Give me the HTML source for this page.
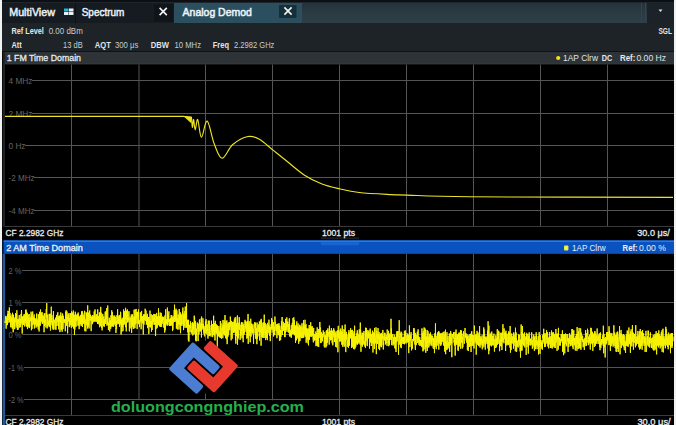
<!DOCTYPE html>
<html><head><meta charset="utf-8"><style>
html,body{margin:0;padding:0;width:676px;height:425px;overflow:hidden;background:#f2f2f2}
svg{display:block}
text{font-family:"Liberation Sans",sans-serif}
</style></head><body>
<svg width="676" height="425" viewBox="0 0 676 425">
<rect x="0" y="0" width="676" height="425" fill="#f2f2f2" />
<rect x="2" y="0" width="672" height="425" fill="#0c1014" />
<rect x="2" y="3" width="672" height="20" fill="#151b21" />
<line x1="2" y1="2.5" x2="674" y2="2.5" stroke="#1e252b" stroke-width="1"/>
<rect x="174" y="3" width="128" height="20" fill="#2c4f60" />
<defs><linearGradient id="gs" x1="0" y1="0" x2="0" y2="1"><stop offset="0" stop-color="#24323a"/><stop offset="0.5" stop-color="#2b3b44"/><stop offset="1" stop-color="#2e3f47"/></linearGradient></defs>
<rect x="302" y="2.8" width="345" height="20.8" fill="url(#gs)" />
<rect x="641" y="3" width="1" height="20" fill="#34444c" />
<rect x="645" y="3" width="1" height="20" fill="#34444c" />
<rect x="647" y="3" width="27" height="20" fill="#1b2329" />
<rect x="64" y="8.5" width="4.5" height="3" fill="#2ab8e0" />
<rect x="69" y="8.5" width="4.5" height="3" fill="#e8f0f4" />
<rect x="64" y="12" width="4.5" height="3" fill="#e8f0f4" />
<rect x="69" y="12" width="4.5" height="3" fill="#e8f0f4" />
<line x1="75.5" y1="3" x2="75.5" y2="23" stroke="#0c1115" stroke-width="1"/>
<rect x="154" y="4.5" width="19" height="17" fill="#0f1418" />
<rect x="279" y="5" width="17.5" height="13" fill="#16303a" />
<path d="M159.6 7.9L166.79999999999998 15.1M166.79999999999998 7.9L159.6 15.1" stroke="#f4f4f4" stroke-width="1.6" fill="none"/>
<path d="M284.4 7.4L291.6 14.6M291.6 7.4L284.4 14.6" stroke="#f4f4f4" stroke-width="1.6" fill="none"/>
<path d="M658.5 9.5L662.5 9.5L660.5 12Z" fill="#e0e0e0"/>
<rect x="2" y="23" width="672" height="28" fill="#1d2327" />
<rect x="2" y="51" width="672" height="1.2" fill="#0e1214" />
<rect x="2" y="52" width="672" height="12.5" fill="#2d3336" />
<line x1="5" y1="64" x2="674" y2="64" stroke="#3a3f42" stroke-width="1"/>
<rect x="2" y="64.5" width="672" height="162" fill="#000" />
<rect x="3" y="52" width="2" height="175" fill="#202224" />
<rect x="2" y="52" width="1" height="175" fill="#08090a" />
<line x1="5" y1="226.5" x2="674" y2="226.5" stroke="#3a3a3a" stroke-width="1"/>
<rect x="2" y="227" width="672" height="13.5" fill="#000" />
<rect x="2" y="239.5" width="2" height="14.5" fill="#0a1a30" />
<rect x="3.7" y="240.2" width="670.3" height="13.6" fill="#0a52c0" />
<line x1="3.7" y1="241.2" x2="674" y2="241.2" stroke="#3a8ee6" stroke-width="1"/>
<rect x="2" y="254" width="672" height="171" fill="#000" />
<rect x="2.5" y="254" width="2.6" height="171" fill="#28568f" />
<line x1="5" y1="415.5" x2="674" y2="415.5" stroke="#3a3a3a" stroke-width="1"/>
<line x1="71.5" y1="64.5" x2="71.5" y2="226" stroke="#555555" stroke-width="1"/>
<line x1="139" y1="64.5" x2="139" y2="226" stroke="#555555" stroke-width="1"/>
<line x1="205.5" y1="64.5" x2="205.5" y2="226" stroke="#555555" stroke-width="1"/>
<line x1="272.5" y1="64.5" x2="272.5" y2="226" stroke="#555555" stroke-width="1"/>
<line x1="339.5" y1="64.5" x2="339.5" y2="226" stroke="#555555" stroke-width="1"/>
<line x1="406.5" y1="64.5" x2="406.5" y2="226" stroke="#555555" stroke-width="1"/>
<line x1="473.5" y1="64.5" x2="473.5" y2="226" stroke="#555555" stroke-width="1"/>
<line x1="540.5" y1="64.5" x2="540.5" y2="226" stroke="#555555" stroke-width="1"/>
<line x1="607.5" y1="64.5" x2="607.5" y2="226" stroke="#555555" stroke-width="1"/>
<line x1="32" y1="80.5" x2="674" y2="80.5" stroke="#555555" stroke-width="1"/>
<text x="8.5" y="83.8" font-size="8.8" font-weight="normal" fill="#646464" textLength="24.0" lengthAdjust="spacingAndGlyphs">4 MHz</text>
<line x1="32" y1="113.5" x2="674" y2="113.5" stroke="#555555" stroke-width="1"/>
<text x="8.5" y="116.8" font-size="8.8" font-weight="normal" fill="#646464" textLength="24.0" lengthAdjust="spacingAndGlyphs">2 MHz</text>
<line x1="25" y1="145.5" x2="674" y2="145.5" stroke="#555555" stroke-width="1"/>
<text x="8.5" y="148.8" font-size="8.8" font-weight="normal" fill="#646464" textLength="17.0" lengthAdjust="spacingAndGlyphs">0 Hz</text>
<line x1="34" y1="177.5" x2="674" y2="177.5" stroke="#555555" stroke-width="1"/>
<text x="8.5" y="180.8" font-size="8.8" font-weight="normal" fill="#646464" textLength="26.0" lengthAdjust="spacingAndGlyphs">-2 MHz</text>
<line x1="34" y1="210.5" x2="674" y2="210.5" stroke="#555555" stroke-width="1"/>
<text x="8.5" y="213.8" font-size="8.8" font-weight="normal" fill="#646464" textLength="26.0" lengthAdjust="spacingAndGlyphs">-4 MHz</text>
<line x1="71.5" y1="254" x2="71.5" y2="415" stroke="#555555" stroke-width="1"/>
<line x1="139" y1="254" x2="139" y2="415" stroke="#555555" stroke-width="1"/>
<line x1="205.5" y1="254" x2="205.5" y2="415" stroke="#555555" stroke-width="1"/>
<line x1="272.5" y1="254" x2="272.5" y2="415" stroke="#555555" stroke-width="1"/>
<line x1="339.5" y1="254" x2="339.5" y2="415" stroke="#555555" stroke-width="1"/>
<line x1="406.5" y1="254" x2="406.5" y2="415" stroke="#555555" stroke-width="1"/>
<line x1="473.5" y1="254" x2="473.5" y2="415" stroke="#555555" stroke-width="1"/>
<line x1="540.5" y1="254" x2="540.5" y2="415" stroke="#555555" stroke-width="1"/>
<line x1="607.5" y1="254" x2="607.5" y2="415" stroke="#555555" stroke-width="1"/>
<line x1="22" y1="270.5" x2="674" y2="270.5" stroke="#555555" stroke-width="1"/>
<text x="8.5" y="273.8" font-size="8.8" font-weight="normal" fill="#646464" textLength="13.0" lengthAdjust="spacingAndGlyphs">2 %</text>
<line x1="22" y1="302.5" x2="674" y2="302.5" stroke="#555555" stroke-width="1"/>
<text x="8.5" y="305.8" font-size="8.8" font-weight="normal" fill="#646464" textLength="13.0" lengthAdjust="spacingAndGlyphs">1 %</text>
<line x1="22" y1="334.5" x2="674" y2="334.5" stroke="#555555" stroke-width="1"/>
<text x="8.5" y="337.8" font-size="8.8" font-weight="normal" fill="#646464" textLength="13.0" lengthAdjust="spacingAndGlyphs">0 %</text>
<line x1="24" y1="367.5" x2="674" y2="367.5" stroke="#555555" stroke-width="1"/>
<text x="8.5" y="370.8" font-size="8.8" font-weight="normal" fill="#646464" textLength="15.0" lengthAdjust="spacingAndGlyphs">-1 %</text>
<line x1="24" y1="399.5" x2="674" y2="399.5" stroke="#555555" stroke-width="1"/>
<text x="8.5" y="402.8" font-size="8.8" font-weight="normal" fill="#646464" textLength="15.0" lengthAdjust="spacingAndGlyphs">-2 %</text>
<text x="9.2" y="16" font-size="11" fill="#e8eef2" stroke="#e8eef2" stroke-width="0.5" textLength="45.8" lengthAdjust="spacingAndGlyphs">MultiView</text>
<text x="81.7" y="16.4" font-size="11" fill="#e8eef2" stroke="#e8eef2" stroke-width="0.5" textLength="42.7" lengthAdjust="spacingAndGlyphs">Spectrum</text>
<text x="182.6" y="16.4" font-size="11" fill="#eef4f8" stroke="#eef4f8" stroke-width="0.5" textLength="69.3" lengthAdjust="spacingAndGlyphs">Analog Demod</text>
<text x="11.4" y="33.8" font-size="9.3" font-weight="bold" fill="#e0e4e6" textLength="32.5" lengthAdjust="spacingAndGlyphs">Ref Level</text>
<text x="48.7" y="33.8" font-size="9.3" font-weight="normal" fill="#c8ccce" textLength="34.1" lengthAdjust="spacingAndGlyphs">0.00 dBm</text>
<text x="11.4" y="47.6" font-size="9.3" font-weight="bold" fill="#e0e4e6" textLength="10.3" lengthAdjust="spacingAndGlyphs">Att</text>
<text x="63.1" y="47.6" font-size="9.3" font-weight="normal" fill="#c8ccce" textLength="19.7" lengthAdjust="spacingAndGlyphs">13 dB</text>
<text x="94.8" y="47.6" font-size="9.3" font-weight="bold" fill="#e0e4e6" textLength="16.0" lengthAdjust="spacingAndGlyphs">AQT</text>
<text x="115" y="47.6" font-size="9.3" font-weight="normal" fill="#c8ccce" textLength="23.3" lengthAdjust="spacingAndGlyphs">300 μs</text>
<text x="150.8" y="47.6" font-size="9.3" font-weight="bold" fill="#e0e4e6" textLength="18.2" lengthAdjust="spacingAndGlyphs">DBW</text>
<text x="174.5" y="47.6" font-size="9.3" font-weight="normal" fill="#c8ccce" textLength="26.5" lengthAdjust="spacingAndGlyphs">10 MHz</text>
<text x="212.8" y="47.6" font-size="9.3" font-weight="bold" fill="#e0e4e6" textLength="16.2" lengthAdjust="spacingAndGlyphs">Freq</text>
<text x="234" y="47.6" font-size="9.3" font-weight="normal" fill="#c8ccce" textLength="40.4" lengthAdjust="spacingAndGlyphs">2.2982 GHz</text>
<text x="658.4" y="33.8" font-size="9.3" font-weight="bold" fill="#e0e4e6" textLength="13.6" lengthAdjust="spacingAndGlyphs">SGL</text>
<text x="6.7" y="61.4" font-size="9.5" fill="#e6eaec" stroke="#e6eaec" stroke-width="0.3" textLength="74.3" lengthAdjust="spacingAndGlyphs">1 FM Time Domain</text>
<circle cx="558.2" cy="58" r="2.1" fill="#f0e020"/>
<text x="563" y="61.4" font-size="9.5" font-weight="normal" fill="#dfe3e5" textLength="35.0" lengthAdjust="spacingAndGlyphs">1AP Clrw</text>
<text x="601.8" y="61.4" font-size="9.5" font-weight="bold" fill="#e6eaec" textLength="10.5" lengthAdjust="spacingAndGlyphs">DC</text>
<text x="620" y="61.4" font-size="9.5" font-weight="bold" fill="#e6eaec" textLength="15.4" lengthAdjust="spacingAndGlyphs">Ref:</text>
<text x="636.4" y="61.4" font-size="9.5" font-weight="normal" fill="#dfe3e5" textLength="29.8" lengthAdjust="spacingAndGlyphs">0.00 Hz</text>
<rect x="321" y="237.3" width="38" height="2" fill="#1c1c1c" />
<rect x="321" y="242.2" width="38" height="3" fill="#1764d2" />
<text x="5.6" y="235.8" font-size="9.3" fill="#e8ecee" stroke="#e8ecee" stroke-width="0.3" textLength="57.7" lengthAdjust="spacingAndGlyphs">CF 2.2982 GHz</text>
<text x="321.9" y="235.8" font-size="9.3" fill="#e8ecee" stroke="#e8ecee" stroke-width="0.3" textLength="33.1" lengthAdjust="spacingAndGlyphs">1001 pts</text>
<text x="637.3" y="235.8" font-size="9.3" fill="#e8ecee" stroke="#e8ecee" stroke-width="0.3" textLength="32.4" lengthAdjust="spacingAndGlyphs">30.0 μs/</text>
<text x="6.2" y="250.8" font-size="9.5" fill="#eef2f6" stroke="#eef2f6" stroke-width="0.3" textLength="76.6" lengthAdjust="spacingAndGlyphs">2 AM Time Domain</text>
<rect x="564" y="245.6" width="4.4" height="5" fill="#f0f040"  rx="1"/>
<text x="572" y="250.8" font-size="9.5" font-weight="normal" fill="#e6eef8" textLength="33.7" lengthAdjust="spacingAndGlyphs">1AP Clrw</text>
<text x="622.6" y="250.8" font-size="9.5" font-weight="bold" fill="#eef2f6" textLength="15.1" lengthAdjust="spacingAndGlyphs">Ref:</text>
<text x="639" y="250.8" font-size="9.5" font-weight="normal" fill="#e6eef8" textLength="26.8" lengthAdjust="spacingAndGlyphs">0.00 %</text>
<text x="5.6" y="424.8" font-size="9.3" fill="#e8ecee" stroke="#e8ecee" stroke-width="0.3" textLength="57.7" lengthAdjust="spacingAndGlyphs">CF 2.2982 GHz</text>
<text x="321.9" y="424.8" font-size="9.3" fill="#e8ecee" stroke="#e8ecee" stroke-width="0.3" textLength="33.1" lengthAdjust="spacingAndGlyphs">1001 pts</text>
<text x="637.4" y="424.8" font-size="9.3" fill="#e8ecee" stroke="#e8ecee" stroke-width="0.3">30.0 μs/</text>
<path d="M5 116.4L183.3 116.4L191.5 117.2C191.65 118.88 192.05 126.92 192.40 127.30C192.75 127.68 193.13 119.08 193.60 119.50C194.07 119.92 194.52 129.80 195.20 129.80C195.88 129.80 196.67 118.27 197.70 119.50C198.73 120.73 199.82 136.93 201.40 137.20C202.98 137.47 205.07 120.00 207.20 121.10C209.33 122.20 211.72 137.62 214.20 143.80C216.68 149.98 219.00 158.08 222.10 158.20C225.20 158.32 228.50 148.12 232.80 144.50C237.10 140.88 243.47 137.38 247.90 136.50C252.33 135.62 255.27 136.97 259.40 139.20C263.53 141.43 268.27 146.35 272.70 149.90C277.13 153.45 280.70 156.28 286.00 160.50C291.30 164.72 298.50 171.28 304.50 175.20C310.50 179.12 316.20 181.73 322.00 184.00C327.80 186.27 333.10 187.38 339.30 188.80C345.50 190.22 350.55 191.53 359.20 192.50C367.85 193.47 383.22 194.17 391.20 194.60C399.18 195.03 393.97 194.73 407.10 195.10C420.23 195.47 425.68 196.42 470.00 196.80C514.32 197.18 639.17 197.30 673.00 197.40" fill="none" stroke="#ece428" stroke-width="1.15" stroke-linejoin="round"/>
<path d="M183.3 116 L191.8 116.8 L191.2 123.2 Z" fill="#e8e020"/>
<path d="M5.00 321.31 L5.17 322.94 L5.33 319.79 L5.50 316.40 L5.67 318.80 L5.84 315.84 L6.00 321.71 L6.17 328.67 L6.34 318.59 L6.50 317.88 L6.67 324.66 L6.84 323.25 L7.00 321.87 L7.17 316.17 L7.34 321.13 L7.51 325.11 L7.67 313.89 L7.84 318.14 L8.01 310.83 L8.17 312.42 L8.34 311.15 L8.51 319.99 L8.67 314.31 L8.84 322.77 L9.01 322.14 L9.18 320.25 L9.34 307.43 L9.51 318.31 L9.68 321.01 L9.84 321.90 L10.01 312.86 L10.18 318.65 L10.35 315.89 L10.51 316.82 L10.68 327.11 L10.85 316.83 L11.01 321.09 L11.18 327.35 L11.35 318.06 L11.51 320.65 L11.68 322.02 L11.85 321.61 L12.02 314.53 L12.18 321.68 L12.35 328.73 L12.52 312.75 L12.68 325.99 L12.85 321.92 L13.02 317.73 L13.19 332.26 L13.35 325.45 L13.52 314.66 L13.69 321.66 L13.85 324.43 L14.02 320.21 L14.19 325.01 L14.35 320.88 L14.52 324.92 L14.69 329.16 L14.86 317.53 L15.02 322.36 L15.19 318.70 L15.36 321.95 L15.52 313.08 L15.69 318.06 L15.86 320.16 L16.02 326.19 L16.19 327.54 L16.36 313.96 L16.53 316.87 L16.69 324.80 L16.86 310.28 L17.03 318.69 L17.19 320.70 L17.36 329.88 L17.53 325.03 L17.70 319.43 L17.86 319.21 L18.03 319.86 L18.20 329.61 L18.36 318.88 L18.53 319.56 L18.70 323.17 L18.86 320.56 L19.03 320.14 L19.20 315.10 L19.37 321.16 L19.53 318.78 L19.70 327.64 L19.87 324.81 L20.03 321.09 L20.20 324.90 L20.37 318.88 L20.53 327.00 L20.70 321.19 L20.87 324.43 L21.04 314.12 L21.20 323.12 L21.37 311.93 L21.54 310.02 L21.70 319.54 L21.87 316.26 L22.04 322.11 L22.21 333.56 L22.37 316.63 L22.54 316.92 L22.71 322.34 L22.87 323.92 L23.04 320.23 L23.21 320.07 L23.37 325.07 L23.54 324.06 L23.71 315.52 L23.88 320.77 L24.04 321.39 L24.21 313.95 L24.38 322.63 L24.54 316.48 L24.71 326.54 L24.88 322.26 L25.05 321.69 L25.21 317.94 L25.38 320.54 L25.55 310.20 L25.71 314.97 L25.88 323.19 L26.05 309.48 L26.21 325.84 L26.38 311.58 L26.55 326.39 L26.72 316.54 L26.88 326.54 L27.05 321.90 L27.22 312.73 L27.38 328.05 L27.55 329.11 L27.72 320.82 L27.88 319.67 L28.05 320.30 L28.22 314.47 L28.39 327.22 L28.55 318.19 L28.72 320.89 L28.89 316.81 L29.05 316.87 L29.22 314.15 L29.39 328.09 L29.56 320.32 L29.72 326.48 L29.89 321.26 L30.06 317.35 L30.22 319.37 L30.39 318.09 L30.56 321.21 L30.72 319.10 L30.89 319.51 L31.06 311.69 L31.23 316.72 L31.39 330.26 L31.56 317.47 L31.73 315.36 L31.89 323.01 L32.06 328.90 L32.23 313.16 L32.39 320.01 L32.56 317.68 L32.73 311.47 L32.90 325.20 L33.06 321.02 L33.23 321.54 L33.40 317.01 L33.56 323.65 L33.73 318.18 L33.90 320.36 L34.07 315.05 L34.23 314.46 L34.40 328.49 L34.57 318.36 L34.73 322.75 L34.90 320.96 L35.07 318.72 L35.23 318.35 L35.40 324.61 L35.57 319.48 L35.74 320.31 L35.90 321.26 L36.07 327.61 L36.24 324.88 L36.40 323.24 L36.57 318.03 L36.74 313.53 L36.90 326.35 L37.07 326.45 L37.24 320.36 L37.41 324.11 L37.57 325.43 L37.74 325.70 L37.91 326.19 L38.07 318.62 L38.24 329.46 L38.41 314.27 L38.58 327.05 L38.74 323.84 L38.91 325.93 L39.08 331.46 L39.24 329.28 L39.41 314.82 L39.58 311.83 L39.74 325.61 L39.91 315.53 L40.08 321.05 L40.25 325.73 L40.41 312.07 L40.58 309.51 L40.75 322.54 L40.91 321.36 L41.08 319.76 L41.25 321.32 L41.42 316.38 L41.58 312.78 L41.75 320.19 L41.92 315.76 L42.08 312.07 L42.25 323.89 L42.42 320.77 L42.58 323.34 L42.75 315.66 L42.92 317.48 L43.09 315.60 L43.25 316.22 L43.42 322.17 L43.59 316.79 L43.75 323.05 L43.92 322.96 L44.09 332.23 L44.25 313.43 L44.42 325.98 L44.59 320.60 L44.76 321.01 L44.92 313.12 L45.09 318.56 L45.26 325.18 L45.42 320.63 L45.59 321.53 L45.76 319.49 L45.93 327.43 L46.09 320.97 L46.26 308.98 L46.43 317.28 L46.59 310.25 L46.76 303.20 L46.93 318.16 L47.09 328.41 L47.26 321.34 L47.43 314.63 L47.60 315.90 L47.76 327.29 L47.93 321.94 L48.10 321.34 L48.26 320.78 L48.43 321.28 L48.60 325.50 L48.76 324.11 L48.93 322.26 L49.10 313.90 L49.27 323.88 L49.43 317.30 L49.60 327.08 L49.77 314.07 L49.93 320.12 L50.10 321.02 L50.27 313.78 L50.44 330.53 L50.60 329.09 L50.77 318.51 L50.94 325.30 L51.10 323.14 L51.27 306.68 L51.44 322.43 L51.60 320.72 L51.77 321.51 L51.94 315.13 L52.11 319.57 L52.27 320.07 L52.44 327.58 L52.61 322.89 L52.77 321.02 L52.94 329.46 L53.11 317.99 L53.28 318.90 L53.44 311.05 L53.61 329.67 L53.78 326.35 L53.94 326.09 L54.11 324.72 L54.28 321.65 L54.44 322.22 L54.61 319.65 L54.78 319.92 L54.95 321.34 L55.11 329.35 L55.28 324.09 L55.45 320.63 L55.61 317.85 L55.78 317.54 L55.95 329.85 L56.11 323.82 L56.28 321.40 L56.45 318.65 L56.62 314.93 L56.78 320.66 L56.95 325.83 L57.12 318.33 L57.28 319.46 L57.45 319.81 L57.62 321.63 L57.79 312.26 L57.95 319.73 L58.12 316.32 L58.29 325.88 L58.45 316.78 L58.62 324.19 L58.79 329.40 L58.95 319.29 L59.12 317.71 L59.29 322.07 L59.46 321.00 L59.62 315.55 L59.79 323.55 L59.96 332.10 L60.12 319.24 L60.29 319.89 L60.46 315.26 L60.62 322.76 L60.79 312.43 L60.96 314.92 L61.13 329.80 L61.29 316.02 L61.46 326.95 L61.63 329.39 L61.79 322.43 L61.96 324.04 L62.13 331.74 L62.30 319.92 L62.46 317.74 L62.63 313.55 L62.80 321.23 L62.96 329.13 L63.13 326.27 L63.30 315.81 L63.46 316.29 L63.63 318.22 L63.80 322.60 L63.97 319.86 L64.13 322.17 L64.30 322.62 L64.47 319.34 L64.63 320.77 L64.80 322.12 L64.97 320.52 L65.14 323.75 L65.30 331.27 L65.47 324.24 L65.64 321.29 L65.80 311.71 L65.97 323.11 L66.14 310.27 L66.30 313.23 L66.47 325.68 L66.64 324.86 L66.81 320.15 L66.97 311.57 L67.14 318.93 L67.31 317.24 L67.47 324.47 L67.64 333.39 L67.81 322.16 L67.97 316.68 L68.14 314.53 L68.31 320.66 L68.48 319.75 L68.64 314.63 L68.81 321.60 L68.98 313.05 L69.14 327.08 L69.31 326.81 L69.48 326.93 L69.65 318.35 L69.81 323.79 L69.98 320.23 L70.15 318.82 L70.31 319.09 L70.48 313.81 L70.65 313.01 L70.81 325.32 L70.98 319.90 L71.15 322.14 L71.32 327.84 L71.48 311.42 L71.65 316.64 L71.82 321.91 L71.98 323.10 L72.15 318.87 L72.32 326.61 L72.48 322.10 L72.65 312.60 L72.82 315.82 L72.99 325.37 L73.15 324.13 L73.32 310.50 L73.49 328.35 L73.65 324.23 L73.82 328.33 L73.99 318.83 L74.16 319.31 L74.32 314.74 L74.49 334.89 L74.66 319.97 L74.82 329.66 L74.99 317.37 L75.16 321.83 L75.32 311.74 L75.49 318.82 L75.66 326.34 L75.83 314.04 L75.99 326.82 L76.16 322.78 L76.33 315.18 L76.49 318.16 L76.66 318.40 L76.83 320.65 L76.99 317.97 L77.16 316.37 L77.33 319.24 L77.50 315.27 L77.66 313.83 L77.83 320.65 L78.00 325.77 L78.16 312.50 L78.33 320.93 L78.50 317.34 L78.67 315.54 L78.83 325.61 L79.00 318.06 L79.17 329.15 L79.33 316.62 L79.50 323.03 L79.67 319.66 L79.83 316.76 L80.00 324.14 L80.17 320.05 L80.34 324.22 L80.50 320.64 L80.67 314.93 L80.84 320.34 L81.00 321.19 L81.17 326.17 L81.34 314.67 L81.51 320.68 L81.67 311.43 L81.84 324.48 L82.01 314.95 L82.17 310.96 L82.34 320.57 L82.51 326.97 L82.67 312.51 L82.84 314.91 L83.01 316.80 L83.18 314.68 L83.34 322.97 L83.51 316.45 L83.68 316.92 L83.84 324.09 L84.01 316.73 L84.18 323.26 L84.34 315.54 L84.51 314.21 L84.68 310.79 L84.85 331.12 L85.01 319.12 L85.18 322.22 L85.35 320.71 L85.51 321.76 L85.68 321.15 L85.85 331.37 L86.02 315.16 L86.18 312.31 L86.35 315.31 L86.52 313.53 L86.68 324.98 L86.85 325.38 L87.02 315.58 L87.18 313.22 L87.35 318.92 L87.52 328.52 L87.69 305.36 L87.85 324.48 L88.02 313.47 L88.19 326.58 L88.35 314.93 L88.52 319.29 L88.69 312.58 L88.85 315.48 L89.02 328.48 L89.19 325.37 L89.36 318.65 L89.52 316.07 L89.69 310.44 L89.86 318.69 L90.02 320.68 L90.19 320.39 L90.36 320.33 L90.53 314.68 L90.69 320.48 L90.86 320.64 L91.03 327.95 L91.19 331.11 L91.36 320.09 L91.53 316.63 L91.69 320.49 L91.86 317.50 L92.03 316.76 L92.20 320.52 L92.36 315.10 L92.53 324.17 L92.70 320.27 L92.86 322.21 L93.03 319.83 L93.20 316.84 L93.37 315.62 L93.53 319.53 L93.70 317.81 L93.87 322.12 L94.03 320.81 L94.20 311.46 L94.37 321.20 L94.53 313.44 L94.70 317.44 L94.87 319.21 L95.04 309.41 L95.20 321.33 L95.37 321.65 L95.54 319.95 L95.70 318.49 L95.87 318.77 L96.04 315.45 L96.20 319.34 L96.37 317.78 L96.54 321.32 L96.71 314.19 L96.87 322.11 L97.04 321.60 L97.21 320.04 L97.37 318.40 L97.54 323.85 L97.71 309.37 L97.88 323.98 L98.04 322.15 L98.21 322.37 L98.38 322.92 L98.54 316.31 L98.71 319.38 L98.88 324.31 L99.04 323.17 L99.21 321.94 L99.38 312.47 L99.55 323.76 L99.71 327.23 L99.88 326.35 L100.05 322.09 L100.21 312.23 L100.38 325.98 L100.55 319.98 L100.71 306.86 L100.88 322.86 L101.05 312.58 L101.22 313.66 L101.38 317.29 L101.55 327.78 L101.72 318.23 L101.88 322.27 L102.05 330.39 L102.22 329.54 L102.39 320.06 L102.55 319.44 L102.72 313.83 L102.89 316.95 L103.05 323.10 L103.22 322.94 L103.39 321.37 L103.55 326.23 L103.72 316.51 L103.89 320.45 L104.06 324.77 L104.22 323.96 L104.39 326.64 L104.56 322.93 L104.72 319.04 L104.89 322.74 L105.06 315.23 L105.23 311.72 L105.39 323.93 L105.56 320.43 L105.73 322.43 L105.89 311.39 L106.06 318.72 L106.23 317.43 L106.39 315.97 L106.56 308.32 L106.73 318.88 L106.90 325.65 L107.06 322.81 L107.23 317.41 L107.40 320.63 L107.56 324.87 L107.73 305.53 L107.90 320.02 L108.06 323.69 L108.23 324.46 L108.40 330.06 L108.57 326.94 L108.73 322.42 L108.90 322.36 L109.07 325.02 L109.23 317.73 L109.40 320.47 L109.57 325.67 L109.74 331.45 L109.90 319.81 L110.07 320.35 L110.24 321.77 L110.40 328.07 L110.57 320.51 L110.74 328.76 L110.90 315.36 L111.07 319.65 L111.24 319.58 L111.41 324.99 L111.57 326.41 L111.74 310.29 L111.91 315.63 L112.07 322.98 L112.24 317.03 L112.41 312.28 L112.57 326.37 L112.74 323.37 L112.91 323.36 L113.08 317.38 L113.24 326.31 L113.41 319.32 L113.58 326.67 L113.74 315.63 L113.91 315.94 L114.08 321.76 L114.25 316.77 L114.41 324.35 L114.58 322.06 L114.75 315.55 L114.91 321.03 L115.08 318.69 L115.25 325.66 L115.41 317.14 L115.58 318.20 L115.75 327.28 L115.92 332.93 L116.08 331.61 L116.25 320.96 L116.42 321.81 L116.58 329.04 L116.75 319.92 L116.92 315.23 L117.09 321.24 L117.25 323.08 L117.42 316.04 L117.59 309.28 L117.75 312.69 L117.92 324.25 L118.09 316.42 L118.25 319.81 L118.42 321.75 L118.59 323.99 L118.76 318.74 L118.92 323.32 L119.09 315.68 L119.26 318.59 L119.42 314.94 L119.59 326.80 L119.76 320.42 L119.92 316.50 L120.09 318.63 L120.26 319.34 L120.43 324.42 L120.59 311.78 L120.76 314.85 L120.93 318.48 L121.09 334.48 L121.26 325.81 L121.43 319.94 L121.60 324.46 L121.76 331.86 L121.93 319.26 L122.10 318.53 L122.26 327.21 L122.43 323.26 L122.60 324.23 L122.76 317.74 L122.93 331.12 L123.10 329.93 L123.27 323.64 L123.43 324.29 L123.60 309.38 L123.77 324.91 L123.93 319.45 L124.10 322.91 L124.27 324.27 L124.43 318.64 L124.60 311.22 L124.77 322.54 L124.94 316.43 L125.10 318.69 L125.27 317.18 L125.44 318.63 L125.60 307.80 L125.77 327.19 L125.94 321.89 L126.11 326.61 L126.27 331.38 L126.44 320.62 L126.61 310.58 L126.77 315.57 L126.94 313.85 L127.11 317.72 L127.27 320.92 L127.44 309.47 L127.61 322.36 L127.78 312.17 L127.94 322.11 L128.11 319.87 L128.28 318.75 L128.44 320.07 L128.61 317.50 L128.78 317.10 L128.94 311.21 L129.11 320.30 L129.28 330.61 L129.45 331.35 L129.61 327.73 L129.78 324.34 L129.95 316.73 L130.11 328.38 L130.28 320.14 L130.45 320.07 L130.62 318.84 L130.78 320.95 L130.95 318.05 L131.12 319.98 L131.28 314.47 L131.45 318.38 L131.62 332.98 L131.78 320.05 L131.95 319.12 L132.12 323.35 L132.29 324.32 L132.45 314.30 L132.62 319.28 L132.79 326.73 L132.95 321.90 L133.12 321.09 L133.29 328.96 L133.46 316.68 L133.62 320.86 L133.79 317.55 L133.96 328.60 L134.12 309.67 L134.29 316.72 L134.46 317.49 L134.62 324.05 L134.79 323.73 L134.96 328.07 L135.13 309.57 L135.29 324.52 L135.46 318.77 L135.63 316.72 L135.79 323.35 L135.96 314.06 L136.13 308.96 L136.29 318.34 L136.46 312.14 L136.63 316.81 L136.80 322.93 L136.96 322.09 L137.13 329.10 L137.30 319.27 L137.46 311.93 L137.63 316.20 L137.80 315.30 L137.97 313.66 L138.13 322.75 L138.30 316.81 L138.47 309.48 L138.63 324.18 L138.80 319.74 L138.97 322.31 L139.13 320.93 L139.30 323.82 L139.47 320.55 L139.64 327.14 L139.80 322.67 L139.97 322.49 L140.14 322.59 L140.30 312.32 L140.47 319.42 L140.64 318.90 L140.80 321.47 L140.97 312.85 L141.14 329.31 L141.31 320.89 L141.47 313.66 L141.64 310.92 L141.81 318.77 L141.97 319.82 L142.14 316.36 L142.31 320.94 L142.48 316.78 L142.64 323.34 L142.81 316.32 L142.98 320.09 L143.14 325.68 L143.31 334.44 L143.48 314.75 L143.64 317.74 L143.81 315.67 L143.98 324.60 L144.15 313.97 L144.31 317.62 L144.48 320.12 L144.65 314.90 L144.81 315.01 L144.98 317.66 L145.15 308.72 L145.32 312.32 L145.48 318.00 L145.65 321.08 L145.82 319.25 L145.98 310.51 L146.15 317.71 L146.32 324.65 L146.48 323.32 L146.65 319.82 L146.82 315.38 L146.99 323.73 L147.15 317.07 L147.32 313.82 L147.49 315.84 L147.65 328.21 L147.82 321.45 L147.99 326.62 L148.15 317.60 L148.32 325.40 L148.49 316.93 L148.66 319.37 L148.82 333.91 L148.99 324.45 L149.16 317.47 L149.32 319.76 L149.49 322.02 L149.66 326.88 L149.83 317.53 L149.99 310.64 L150.16 318.68 L150.33 320.32 L150.49 320.82 L150.66 327.45 L150.83 321.95 L150.99 324.68 L151.16 314.15 L151.33 324.98 L151.50 331.73 L151.66 324.45 L151.83 321.59 L152.00 321.04 L152.16 330.02 L152.33 315.09 L152.50 319.58 L152.66 322.72 L152.83 324.28 L153.00 317.78 L153.17 321.87 L153.33 318.65 L153.50 320.84 L153.67 319.45 L153.83 313.90 L154.00 320.06 L154.17 324.99 L154.34 314.85 L154.50 318.84 L154.67 323.82 L154.84 314.28 L155.00 321.16 L155.17 314.33 L155.34 326.40 L155.50 336.06 L155.67 334.06 L155.84 318.95 L156.01 324.22 L156.17 320.81 L156.34 320.71 L156.51 328.66 L156.67 312.89 L156.84 325.94 L157.01 319.87 L157.18 327.88 L157.34 321.16 L157.51 316.43 L157.68 321.65 L157.84 324.18 L158.01 320.32 L158.18 322.81 L158.34 317.25 L158.51 308.38 L158.68 325.07 L158.85 323.96 L159.01 320.93 L159.18 320.49 L159.35 325.81 L159.51 317.59 L159.68 316.22 L159.85 319.07 L160.01 326.64 L160.18 312.47 L160.35 326.65 L160.52 316.58 L160.68 314.04 L160.85 327.02 L161.02 319.56 L161.18 312.94 L161.35 318.11 L161.52 325.21 L161.69 326.64 L161.85 317.73 L162.02 322.31 L162.19 324.00 L162.35 316.53 L162.52 322.03 L162.69 319.90 L162.85 317.12 L163.02 317.36 L163.19 320.43 L163.36 320.23 L163.52 316.95 L163.69 317.72 L163.86 327.71 L164.02 321.23 L164.19 324.92 L164.36 326.66 L164.52 323.29 L164.69 332.54 L164.86 315.51 L165.03 324.49 L165.19 318.29 L165.36 330.25 L165.53 329.39 L165.69 309.29 L165.86 314.71 L166.03 323.69 L166.20 324.37 L166.36 324.08 L166.53 319.64 L166.70 322.53 L166.86 323.61 L167.03 319.59 L167.20 325.67 L167.36 307.59 L167.53 323.50 L167.70 314.33 L167.87 325.28 L168.03 318.75 L168.20 315.12 L168.37 322.06 L168.53 314.99 L168.70 314.98 L168.87 311.38 L169.04 319.85 L169.20 322.73 L169.37 325.62 L169.54 319.21 L169.70 325.75 L169.87 320.09 L170.04 319.47 L170.20 323.14 L170.37 325.80 L170.54 318.10 L170.71 318.64 L170.87 319.09 L171.04 320.43 L171.21 315.02 L171.37 325.62 L171.54 317.77 L171.71 322.51 L171.87 315.42 L172.04 321.94 L172.21 322.65 L172.38 317.64 L172.54 331.07 L172.71 322.00 L172.88 329.73 L173.04 325.23 L173.21 316.31 L173.38 317.84 L173.55 322.34 L173.71 320.28 L173.88 320.21 L174.05 318.36 L174.21 309.99 L174.38 318.70 L174.55 304.68 L174.71 321.98 L174.88 315.94 L175.05 315.99 L175.22 318.72 L175.38 321.42 L175.55 312.05 L175.72 310.30 L175.88 314.05 L176.05 308.69 L176.22 314.60 L176.38 328.66 L176.55 314.10 L176.72 323.49 L176.89 310.48 L177.05 321.55 L177.22 318.14 L177.39 319.57 L177.55 323.03 L177.72 329.56 L177.89 321.23 L178.06 320.58 L178.22 314.54 L178.39 323.10 L178.56 318.53 L178.72 324.46 L178.89 319.58 L179.06 329.46 L179.22 308.97 L179.39 318.25 L179.56 324.72 L179.73 317.94 L179.89 315.51 L180.06 318.41 L180.23 312.28 L180.39 320.52 L180.56 333.29 L180.73 326.16 L180.89 313.76 L181.06 315.05 L181.23 317.63 L181.40 325.38 L181.56 315.33 L181.73 316.05 L181.90 324.71 L182.06 325.79 L182.23 317.79 L182.40 313.69 L182.57 311.32 L182.73 315.03 L182.90 307.57 L183.07 323.96 L183.23 315.50 L183.40 322.48 L183.57 330.10 L183.73 326.28 L183.90 313.49 L184.07 325.80 L184.24 326.19 L184.40 315.71 L184.57 314.57 L184.74 319.21 L184.90 311.00 L185.07 327.90 L185.24 306.58 L185.41 313.72 L185.57 318.32 L185.74 318.55 L185.91 320.71 L186.07 321.59 L186.24 319.29 L186.41 327.68 L186.57 303.00 L186.74 322.76 L186.91 319.50 L187.08 324.83 L187.24 325.98 L187.41 320.42 L187.58 322.58 L187.74 332.22 L187.91 329.36 L188.08 324.06 L188.24 339.03 L188.41 340.52 L188.58 319.79 L188.75 329.50 L188.91 341.65 L189.08 332.17 L189.25 329.09 L189.41 326.73 L189.58 324.91 L189.75 326.73 L189.92 324.88 L190.08 332.01 L190.25 325.74 L190.42 325.51 L190.58 321.33 L190.75 327.68 L190.92 323.04 L191.08 326.98 L191.25 333.71 L191.42 330.00 L191.59 331.47 L191.75 329.97 L191.92 328.34 L192.09 327.33 L192.25 326.34 L192.42 332.22 L192.59 322.09 L192.75 335.44 L192.92 328.26 L193.09 323.96 L193.26 325.40 L193.42 324.38 L193.59 328.99 L193.76 323.18 L193.92 334.41 L194.09 323.84 L194.26 315.65 L194.43 324.14 L194.59 317.12 L194.76 327.90 L194.93 334.01 L195.09 331.76 L195.26 320.85 L195.43 322.97 L195.59 340.45 L195.76 329.98 L195.93 328.26 L196.10 334.06 L196.26 341.75 L196.43 335.40 L196.60 329.04 L196.76 330.24 L196.93 331.69 L197.10 324.94 L197.27 322.49 L197.43 328.61 L197.60 323.12 L197.77 328.00 L197.93 328.88 L198.10 341.24 L198.27 323.69 L198.43 327.71 L198.60 327.49 L198.77 330.80 L198.94 334.16 L199.10 325.72 L199.27 323.91 L199.44 319.41 L199.60 323.35 L199.77 331.40 L199.94 328.71 L200.10 322.89 L200.27 326.43 L200.44 328.66 L200.61 331.27 L200.77 325.25 L200.94 327.14 L201.11 318.53 L201.27 322.20 L201.44 337.44 L201.61 316.52 L201.78 326.71 L201.94 329.78 L202.11 326.01 L202.28 324.15 L202.44 328.27 L202.61 328.58 L202.78 328.17 L202.94 318.30 L203.11 327.83 L203.28 323.95 L203.45 325.65 L203.61 329.92 L203.78 332.20 L203.95 333.62 L204.11 325.96 L204.28 333.79 L204.45 335.17 L204.61 334.97 L204.78 336.38 L204.95 327.94 L205.12 327.79 L205.28 333.30 L205.45 321.25 L205.62 329.93 L205.78 325.87 L205.95 326.77 L206.12 319.23 L206.29 323.92 L206.45 328.71 L206.62 333.72 L206.79 334.29 L206.95 328.41 L207.12 327.82 L207.29 324.30 L207.45 331.09 L207.62 327.53 L207.79 332.23 L207.96 338.54 L208.12 328.74 L208.29 320.69 L208.46 324.20 L208.62 320.93 L208.79 322.37 L208.96 336.14 L209.13 330.22 L209.29 320.62 L209.46 332.59 L209.63 335.93 L209.79 327.03 L209.96 325.30 L210.13 327.17 L210.29 330.60 L210.46 332.57 L210.63 335.56 L210.80 335.74 L210.96 335.60 L211.13 336.58 L211.30 332.73 L211.46 320.68 L211.63 328.39 L211.80 330.85 L211.96 327.02 L212.13 334.15 L212.30 327.17 L212.47 324.07 L212.63 337.11 L212.80 332.84 L212.97 330.39 L213.13 334.29 L213.30 335.05 L213.47 331.09 L213.64 315.71 L213.80 325.52 L213.97 326.73 L214.14 323.84 L214.30 330.35 L214.47 335.83 L214.64 326.61 L214.80 323.05 L214.97 340.45 L215.14 326.82 L215.31 320.82 L215.47 330.61 L215.64 331.64 L215.81 325.42 L215.97 333.65 L216.14 326.62 L216.31 324.22 L216.47 330.28 L216.64 333.54 L216.81 325.81 L216.98 331.12 L217.14 328.79 L217.31 348.72 L217.48 325.40 L217.64 336.91 L217.81 329.01 L217.98 328.60 L218.15 333.27 L218.31 334.22 L218.48 336.27 L218.65 331.11 L218.81 326.00 L218.98 326.34 L219.15 332.10 L219.31 332.49 L219.48 336.99 L219.65 331.60 L219.82 335.13 L219.98 337.64 L220.15 330.21 L220.32 321.13 L220.48 322.81 L220.65 321.39 L220.82 338.05 L220.98 323.47 L221.15 336.08 L221.32 332.52 L221.49 338.73 L221.65 334.82 L221.82 328.74 L221.99 328.20 L222.15 329.77 L222.32 330.26 L222.49 326.38 L222.66 329.12 L222.82 338.15 L222.99 319.94 L223.16 330.72 L223.32 324.31 L223.49 330.33 L223.66 333.92 L223.82 328.98 L223.99 333.55 L224.16 320.56 L224.33 335.39 L224.49 325.15 L224.66 332.72 L224.83 330.30 L224.99 315.08 L225.16 325.14 L225.33 330.51 L225.50 337.85 L225.66 330.88 L225.83 330.72 L226.00 321.53 L226.16 337.17 L226.33 339.24 L226.50 329.46 L226.66 328.09 L226.83 320.40 L227.00 334.16 L227.17 344.16 L227.33 333.24 L227.50 336.25 L227.67 332.28 L227.83 323.88 L228.00 336.65 L228.17 322.51 L228.33 328.14 L228.50 330.83 L228.67 334.16 L228.84 331.59 L229.00 331.43 L229.17 325.11 L229.34 322.21 L229.50 329.64 L229.67 325.39 L229.84 322.11 L230.01 322.34 L230.17 326.60 L230.34 316.56 L230.51 321.89 L230.67 320.31 L230.84 330.30 L231.01 331.54 L231.17 340.34 L231.34 321.06 L231.51 325.56 L231.68 334.32 L231.84 328.11 L232.01 327.50 L232.18 338.70 L232.34 327.44 L232.51 322.94 L232.68 322.06 L232.84 331.15 L233.01 330.98 L233.18 321.76 L233.35 323.88 L233.51 332.98 L233.68 332.47 L233.85 325.76 L234.01 332.72 L234.18 332.45 L234.35 319.49 L234.52 327.58 L234.68 331.58 L234.85 325.36 L235.02 317.54 L235.18 327.74 L235.35 333.44 L235.52 340.17 L235.68 317.25 L235.85 343.67 L236.02 323.10 L236.19 334.56 L236.35 336.09 L236.52 334.71 L236.69 330.12 L236.85 322.91 L237.02 332.75 L237.19 325.37 L237.36 315.43 L237.52 344.86 L237.69 333.19 L237.86 339.30 L238.02 324.29 L238.19 337.37 L238.36 338.04 L238.52 337.85 L238.69 329.15 L238.86 322.69 L239.03 328.08 L239.19 317.18 L239.36 319.94 L239.53 329.81 L239.69 323.85 L239.86 328.40 L240.03 328.70 L240.19 339.92 L240.36 336.44 L240.53 329.05 L240.70 335.95 L240.86 325.01 L241.03 327.45 L241.20 334.31 L241.36 322.47 L241.53 327.77 L241.70 322.04 L241.87 329.95 L242.03 338.28 L242.20 325.16 L242.37 330.54 L242.53 324.36 L242.70 322.98 L242.87 322.50 L243.03 339.30 L243.20 342.29 L243.37 331.96 L243.54 324.38 L243.70 333.18 L243.87 327.46 L244.04 334.81 L244.20 330.90 L244.37 331.22 L244.54 332.64 L244.70 326.11 L244.87 327.08 L245.04 319.83 L245.21 326.87 L245.37 321.48 L245.54 328.31 L245.71 324.03 L245.87 329.86 L246.04 331.79 L246.21 321.49 L246.38 324.83 L246.54 324.11 L246.71 333.41 L246.88 338.68 L247.04 333.98 L247.21 327.38 L247.38 337.36 L247.54 320.97 L247.71 337.55 L247.88 325.69 L248.05 314.01 L248.21 343.88 L248.38 337.98 L248.55 323.62 L248.71 330.23 L248.88 328.12 L249.05 329.86 L249.22 321.14 L249.38 325.55 L249.55 331.87 L249.72 330.52 L249.88 335.90 L250.05 329.74 L250.22 342.22 L250.38 325.36 L250.55 330.73 L250.72 318.76 L250.89 322.41 L251.05 336.61 L251.22 324.11 L251.39 332.22 L251.55 328.96 L251.72 323.55 L251.89 327.38 L252.05 326.47 L252.22 326.62 L252.39 333.44 L252.56 332.89 L252.72 326.12 L252.89 324.31 L253.06 330.85 L253.22 328.75 L253.39 334.96 L253.56 343.90 L253.73 333.94 L253.89 329.11 L254.06 328.35 L254.23 324.59 L254.39 324.31 L254.56 322.40 L254.73 327.13 L254.89 326.95 L255.06 333.39 L255.23 327.11 L255.40 328.21 L255.56 322.60 L255.73 338.35 L255.90 332.09 L256.06 339.14 L256.23 333.68 L256.40 337.49 L256.56 327.93 L256.73 333.24 L256.90 344.18 L257.07 322.57 L257.23 335.77 L257.40 338.64 L257.57 331.62 L257.73 334.56 L257.90 336.34 L258.07 325.61 L258.24 331.60 L258.40 324.42 L258.57 325.50 L258.74 325.83 L258.90 328.50 L259.07 330.12 L259.24 331.85 L259.40 321.32 L259.57 340.45 L259.74 335.81 L259.91 333.39 L260.07 327.28 L260.24 328.80 L260.41 332.39 L260.57 331.62 L260.74 319.83 L260.91 333.48 L261.08 345.74 L261.24 318.89 L261.41 334.91 L261.58 331.90 L261.74 328.67 L261.91 337.04 L262.08 322.62 L262.24 330.21 L262.41 337.55 L262.58 328.18 L262.75 326.92 L262.91 329.93 L263.08 326.76 L263.25 338.01 L263.41 324.14 L263.58 334.20 L263.75 322.19 L263.91 333.04 L264.08 328.66 L264.25 314.65 L264.42 329.21 L264.58 323.21 L264.75 326.10 L264.92 337.94 L265.08 322.92 L265.25 323.23 L265.42 337.37 L265.59 329.88 L265.75 340.11 L265.92 331.04 L266.09 324.22 L266.25 328.83 L266.42 337.89 L266.59 334.52 L266.75 329.20 L266.92 329.47 L267.09 328.55 L267.26 325.92 L267.42 340.10 L267.59 329.22 L267.76 322.78 L267.92 326.47 L268.09 333.28 L268.26 332.79 L268.42 328.38 L268.59 325.38 L268.76 329.29 L268.93 319.69 L269.09 321.78 L269.26 333.66 L269.43 326.43 L269.59 331.79 L269.76 336.02 L269.93 332.80 L270.10 329.24 L270.26 341.15 L270.43 332.89 L270.60 327.11 L270.76 333.25 L270.93 331.41 L271.10 324.26 L271.26 329.51 L271.43 328.16 L271.60 317.97 L271.77 328.11 L271.93 327.48 L272.10 326.60 L272.27 319.78 L272.43 327.07 L272.60 328.85 L272.77 329.64 L272.93 322.64 L273.10 332.63 L273.27 322.18 L273.44 327.79 L273.60 336.43 L273.77 325.13 L273.94 326.15 L274.10 335.11 L274.27 326.86 L274.44 327.35 L274.61 330.28 L274.77 334.95 L274.94 316.56 L275.11 324.33 L275.27 321.90 L275.44 322.88 L275.61 324.18 L275.77 324.26 L275.94 330.70 L276.11 323.98 L276.28 329.68 L276.44 331.25 L276.61 324.87 L276.78 329.90 L276.94 338.20 L277.11 330.79 L277.28 325.38 L277.45 328.60 L277.61 323.80 L277.78 330.48 L277.95 333.81 L278.11 324.34 L278.28 327.77 L278.45 335.20 L278.61 326.14 L278.78 329.99 L278.95 323.18 L279.12 324.33 L279.28 325.33 L279.45 340.89 L279.62 326.10 L279.78 326.00 L279.95 325.81 L280.12 328.00 L280.28 332.51 L280.45 329.94 L280.62 340.21 L280.79 330.07 L280.95 336.85 L281.12 330.79 L281.29 332.21 L281.45 320.94 L281.62 328.17 L281.79 328.49 L281.96 327.53 L282.12 317.02 L282.29 334.91 L282.46 326.73 L282.62 326.44 L282.79 327.44 L282.96 327.59 L283.12 331.08 L283.29 321.85 L283.46 323.71 L283.63 330.43 L283.79 329.63 L283.96 326.75 L284.13 325.66 L284.29 324.23 L284.46 328.49 L284.63 336.93 L284.79 322.99 L284.96 337.18 L285.13 333.47 L285.30 326.36 L285.46 333.19 L285.63 318.84 L285.80 319.42 L285.96 321.88 L286.13 326.75 L286.30 327.24 L286.47 326.23 L286.63 329.64 L286.80 317.38 L286.97 331.88 L287.13 321.38 L287.30 325.58 L287.47 326.97 L287.63 322.92 L287.80 321.76 L287.97 323.80 L288.14 329.30 L288.30 332.64 L288.47 332.53 L288.64 323.98 L288.80 325.13 L288.97 324.45 L289.14 332.02 L289.31 318.37 L289.47 336.42 L289.64 326.97 L289.81 325.36 L289.97 332.03 L290.14 335.40 L290.31 331.64 L290.47 335.58 L290.64 330.55 L290.81 336.61 L290.98 336.72 L291.14 329.36 L291.31 337.85 L291.48 330.87 L291.64 330.47 L291.81 324.96 L291.98 328.47 L292.14 334.36 L292.31 322.90 L292.48 333.72 L292.65 332.09 L292.81 331.73 L292.98 318.10 L293.15 329.70 L293.31 333.86 L293.48 326.13 L293.65 330.85 L293.82 317.31 L293.98 334.11 L294.15 326.80 L294.32 335.27 L294.48 320.37 L294.65 334.34 L294.82 329.26 L294.98 335.04 L295.15 325.54 L295.32 327.26 L295.49 343.02 L295.65 326.15 L295.82 326.86 L295.99 329.26 L296.15 325.18 L296.32 337.39 L296.49 340.36 L296.65 326.06 L296.82 321.43 L296.99 337.40 L297.16 338.61 L297.32 335.54 L297.49 337.41 L297.66 326.31 L297.82 330.18 L297.99 323.53 L298.16 323.37 L298.33 336.59 L298.49 327.53 L298.66 343.80 L298.83 331.70 L298.99 327.80 L299.16 335.74 L299.33 341.29 L299.49 334.08 L299.66 324.74 L299.83 333.51 L300.00 340.96 L300.16 328.82 L300.33 327.30 L300.50 337.18 L300.66 332.39 L300.83 325.59 L301.00 329.59 L301.17 327.55 L301.33 333.37 L301.50 332.37 L301.67 338.13 L301.83 335.73 L302.00 323.26 L302.17 334.13 L302.33 338.09 L302.50 334.46 L302.67 337.65 L302.84 328.99 L303.00 326.81 L303.17 337.19 L303.34 326.24 L303.50 320.25 L303.67 337.80 L303.84 328.21 L304.00 330.54 L304.17 324.56 L304.34 324.99 L304.51 325.95 L304.67 330.36 L304.84 334.41 L305.01 319.76 L305.17 336.57 L305.34 325.96 L305.51 326.63 L305.68 336.25 L305.84 332.14 L306.01 324.13 L306.18 342.76 L306.34 327.91 L306.51 334.03 L306.68 333.80 L306.84 340.49 L307.01 330.26 L307.18 338.34 L307.35 328.74 L307.51 339.02 L307.68 328.69 L307.85 330.92 L308.01 343.37 L308.18 334.72 L308.35 333.61 L308.51 345.36 L308.68 335.05 L308.85 328.60 L309.02 337.16 L309.18 325.03 L309.35 339.39 L309.52 339.85 L309.68 330.09 L309.85 328.96 L310.02 334.52 L310.19 333.41 L310.35 326.63 L310.52 336.50 L310.69 322.18 L310.85 330.46 L311.02 331.24 L311.19 331.98 L311.35 335.20 L311.52 326.78 L311.69 336.80 L311.86 332.59 L312.02 330.04 L312.19 326.12 L312.36 327.16 L312.52 335.67 L312.69 328.41 L312.86 334.09 L313.03 339.61 L313.19 339.47 L313.36 342.40 L313.53 332.21 L313.69 327.90 L313.86 339.51 L314.03 335.62 L314.19 340.13 L314.36 334.03 L314.53 340.57 L314.70 338.68 L314.86 338.97 L315.03 336.84 L315.20 336.29 L315.36 335.41 L315.53 335.39 L315.70 339.62 L315.86 331.39 L316.03 346.16 L316.20 333.67 L316.37 339.70 L316.53 333.81 L316.70 332.97 L316.87 345.53 L317.03 332.68 L317.20 327.38 L317.37 330.51 L317.54 332.71 L317.70 346.34 L317.87 335.65 L318.04 339.68 L318.20 329.05 L318.37 336.53 L318.54 338.31 L318.70 347.03 L318.87 329.88 L319.04 338.01 L319.21 336.38 L319.37 329.12 L319.54 334.66 L319.71 333.34 L319.87 322.03 L320.04 338.14 L320.21 337.84 L320.37 332.48 L320.54 327.56 L320.71 343.09 L320.88 336.44 L321.04 340.59 L321.21 342.78 L321.38 332.19 L321.54 339.54 L321.71 333.78 L321.88 334.78 L322.05 334.68 L322.21 335.17 L322.38 341.33 L322.55 335.91 L322.71 334.41 L322.88 333.76 L323.05 337.18 L323.21 330.41 L323.38 332.59 L323.55 335.10 L323.72 332.30 L323.88 334.78 L324.05 332.10 L324.22 346.51 L324.38 342.82 L324.55 338.01 L324.72 335.27 L324.88 347.64 L325.05 337.39 L325.22 335.16 L325.39 337.33 L325.55 337.38 L325.72 343.48 L325.89 335.64 L326.05 347.32 L326.22 330.94 L326.39 339.64 L326.56 330.34 L326.72 345.87 L326.89 334.08 L327.06 335.60 L327.22 341.03 L327.39 342.88 L327.56 329.89 L327.72 334.12 L327.89 328.38 L328.06 336.83 L328.23 335.55 L328.39 334.21 L328.56 332.39 L328.73 334.06 L328.89 332.10 L329.06 339.14 L329.23 344.60 L329.40 325.66 L329.56 335.67 L329.73 334.04 L329.90 339.07 L330.06 331.15 L330.23 335.61 L330.40 330.72 L330.56 340.30 L330.73 337.04 L330.90 335.63 L331.07 338.58 L331.23 335.21 L331.40 328.05 L331.57 339.89 L331.73 338.23 L331.90 335.82 L332.07 342.11 L332.23 343.42 L332.40 330.74 L332.57 332.48 L332.74 345.31 L332.90 344.63 L333.07 332.79 L333.24 330.38 L333.40 333.39 L333.57 334.19 L333.74 328.24 L333.91 337.15 L334.07 329.96 L334.24 330.37 L334.41 342.09 L334.57 333.32 L334.74 336.61 L334.91 340.59 L335.07 341.63 L335.24 335.33 L335.41 337.45 L335.58 332.69 L335.74 346.87 L335.91 340.86 L336.08 331.23 L336.24 337.33 L336.41 341.24 L336.58 339.95 L336.74 347.38 L336.91 344.87 L337.08 334.37 L337.25 336.85 L337.41 330.29 L337.58 338.72 L337.75 338.18 L337.91 352.23 L338.08 337.90 L338.25 325.85 L338.42 333.68 L338.58 337.99 L338.75 330.47 L338.92 332.62 L339.08 335.38 L339.25 339.28 L339.42 336.49 L339.58 332.52 L339.75 341.74 L339.92 334.45 L340.09 334.68 L340.25 329.84 L340.42 333.11 L340.59 341.02 L340.75 328.54 L340.92 337.06 L341.09 341.40 L341.26 335.38 L341.42 338.78 L341.59 331.32 L341.76 344.68 L341.92 343.53 L342.09 338.78 L342.26 325.42 L342.42 331.74 L342.59 342.87 L342.76 346.92 L342.93 339.14 L343.09 344.37 L343.26 334.17 L343.43 336.48 L343.59 337.53 L343.76 339.86 L343.93 329.13 L344.09 342.71 L344.26 346.64 L344.43 331.23 L344.60 330.10 L344.76 339.49 L344.93 333.97 L345.10 324.53 L345.26 342.02 L345.43 338.44 L345.60 334.96 L345.77 352.12 L345.93 338.36 L346.10 333.46 L346.27 338.16 L346.43 331.89 L346.60 333.43 L346.77 339.75 L346.93 334.58 L347.10 335.15 L347.27 346.81 L347.44 342.37 L347.60 342.06 L347.77 340.56 L347.94 340.32 L348.10 345.67 L348.27 337.56 L348.44 347.88 L348.60 332.44 L348.77 336.28 L348.94 330.10 L349.11 335.33 L349.27 340.55 L349.44 345.68 L349.61 334.06 L349.77 337.74 L349.94 335.74 L350.11 333.66 L350.28 331.18 L350.44 338.15 L350.61 328.21 L350.78 338.35 L350.94 337.86 L351.11 334.13 L351.28 332.19 L351.44 330.15 L351.61 348.06 L351.78 330.39 L351.95 346.34 L352.11 341.08 L352.28 335.78 L352.45 329.83 L352.61 343.53 L352.78 347.31 L352.95 332.67 L353.12 336.17 L353.28 345.04 L353.45 339.67 L353.62 348.82 L353.78 334.69 L353.95 340.82 L354.12 330.96 L354.28 349.37 L354.45 333.83 L354.62 325.71 L354.79 337.17 L354.95 337.10 L355.12 348.40 L355.29 336.01 L355.45 337.81 L355.62 341.15 L355.79 346.61 L355.95 337.55 L356.12 343.62 L356.29 340.75 L356.46 336.28 L356.62 338.34 L356.79 338.08 L356.96 332.89 L357.12 344.60 L357.29 330.31 L357.46 344.38 L357.63 343.19 L357.79 337.44 L357.96 333.74 L358.13 336.71 L358.29 340.56 L358.46 342.06 L358.63 339.55 L358.79 343.44 L358.96 334.92 L359.13 339.28 L359.30 329.37 L359.46 342.20 L359.63 338.85 L359.80 335.72 L359.96 344.40 L360.13 342.77 L360.30 322.53 L360.46 338.25 L360.63 330.03 L360.80 343.90 L360.97 351.73 L361.13 335.20 L361.30 338.46 L361.47 336.68 L361.63 339.99 L361.80 341.61 L361.97 345.15 L362.14 332.65 L362.30 346.73 L362.47 332.96 L362.64 339.62 L362.80 344.47 L362.97 342.03 L363.14 332.95 L363.30 334.25 L363.47 335.57 L363.64 337.84 L363.81 344.44 L363.97 331.03 L364.14 340.70 L364.31 341.50 L364.47 341.22 L364.64 341.36 L364.81 346.51 L364.97 340.85 L365.14 342.88 L365.31 341.27 L365.48 348.04 L365.64 327.73 L365.81 345.24 L365.98 336.76 L366.14 336.65 L366.31 332.87 L366.48 327.93 L366.65 336.11 L366.81 334.44 L366.98 340.94 L367.15 330.13 L367.31 346.11 L367.48 339.73 L367.65 336.88 L367.81 334.35 L367.98 333.92 L368.15 332.04 L368.32 335.27 L368.48 338.30 L368.65 337.30 L368.82 330.50 L368.98 336.82 L369.15 333.37 L369.32 339.17 L369.49 348.55 L369.65 341.74 L369.82 336.58 L369.99 329.37 L370.15 328.59 L370.32 329.04 L370.49 342.32 L370.65 334.12 L370.82 338.68 L370.99 334.92 L371.16 338.85 L371.32 346.06 L371.49 334.59 L371.66 336.49 L371.82 333.93 L371.99 343.18 L372.16 332.73 L372.32 332.15 L372.49 330.75 L372.66 330.64 L372.83 340.99 L372.99 352.53 L373.16 332.93 L373.33 343.64 L373.49 339.80 L373.66 332.36 L373.83 336.90 L374.00 337.15 L374.16 334.64 L374.33 349.06 L374.50 327.96 L374.66 340.55 L374.83 340.28 L375.00 335.27 L375.16 339.49 L375.33 343.30 L375.50 339.53 L375.67 340.78 L375.83 343.25 L376.00 327.31 L376.17 346.63 L376.33 354.16 L376.50 343.90 L376.67 344.09 L376.83 330.77 L377.00 337.87 L377.17 334.06 L377.34 335.30 L377.50 343.85 L377.67 334.12 L377.84 337.83 L378.00 328.05 L378.17 337.68 L378.34 339.06 L378.51 334.69 L378.67 334.61 L378.84 348.95 L379.01 331.93 L379.17 332.81 L379.34 334.14 L379.51 345.19 L379.67 350.16 L379.84 340.43 L380.01 334.66 L380.18 336.26 L380.34 344.48 L380.51 333.61 L380.68 346.62 L380.84 346.43 L381.01 339.03 L381.18 342.20 L381.35 342.77 L381.51 347.20 L381.68 332.88 L381.85 345.16 L382.01 336.61 L382.18 334.45 L382.35 339.24 L382.51 337.51 L382.68 333.26 L382.85 329.91 L383.02 333.52 L383.18 346.69 L383.35 349.50 L383.52 342.29 L383.68 345.24 L383.85 335.88 L384.02 338.30 L384.18 340.29 L384.35 332.79 L384.52 333.30 L384.69 339.28 L384.85 336.99 L385.02 332.91 L385.19 340.89 L385.35 337.32 L385.52 344.39 L385.69 338.75 L385.86 337.13 L386.02 339.49 L386.19 337.85 L386.36 335.12 L386.52 336.59 L386.69 342.93 L386.86 342.37 L387.02 345.89 L387.19 329.51 L387.36 336.67 L387.53 336.55 L387.69 340.02 L387.86 336.36 L388.03 336.03 L388.19 343.16 L388.36 339.84 L388.53 330.84 L388.69 346.21 L388.86 344.36 L389.03 335.72 L389.20 343.46 L389.36 334.84 L389.53 345.08 L389.70 337.70 L389.86 333.38 L390.03 336.86 L390.20 334.70 L390.37 339.97 L390.53 339.89 L390.70 339.12 L390.87 335.87 L391.03 318.80 L391.20 339.45 L391.37 328.52 L391.53 340.30 L391.70 345.18 L391.87 340.47 L392.04 336.83 L392.20 337.98 L392.37 338.25 L392.54 335.21 L392.70 335.78 L392.87 333.91 L393.04 345.53 L393.21 338.92 L393.37 344.27 L393.54 337.29 L393.71 339.41 L393.87 338.09 L394.04 341.57 L394.21 343.58 L394.37 340.36 L394.54 335.34 L394.71 334.76 L394.88 348.18 L395.04 337.52 L395.21 337.46 L395.38 349.14 L395.54 345.06 L395.71 342.01 L395.88 336.89 L396.04 352.03 L396.21 341.25 L396.38 342.11 L396.55 338.16 L396.71 331.33 L396.88 331.77 L397.05 341.36 L397.21 341.28 L397.38 337.48 L397.55 332.69 L397.72 331.21 L397.88 337.34 L398.05 331.14 L398.22 344.10 L398.38 345.50 L398.55 354.72 L398.72 344.00 L398.88 335.91 L399.05 334.38 L399.22 320.20 L399.39 335.91 L399.55 337.97 L399.72 344.52 L399.89 342.57 L400.05 342.44 L400.22 340.39 L400.39 342.85 L400.55 347.18 L400.72 333.37 L400.89 336.72 L401.06 331.60 L401.22 348.14 L401.39 346.38 L401.56 343.39 L401.72 332.66 L401.89 340.21 L402.06 337.98 L402.23 339.83 L402.39 338.24 L402.56 342.14 L402.73 337.11 L402.89 343.99 L403.06 340.62 L403.23 337.69 L403.39 338.69 L403.56 336.89 L403.73 343.79 L403.90 337.83 L404.06 340.95 L404.23 337.17 L404.40 331.17 L404.56 344.32 L404.73 333.53 L404.90 343.09 L405.07 341.67 L405.23 330.25 L405.40 334.17 L405.57 336.54 L405.73 334.86 L405.90 332.88 L406.07 343.46 L406.23 338.07 L406.40 341.52 L406.57 337.03 L406.74 341.08 L406.90 335.28 L407.07 339.27 L407.24 342.62 L407.40 339.67 L407.57 336.92 L407.74 333.46 L407.90 340.36 L408.07 341.34 L408.24 338.03 L408.41 335.22 L408.57 342.44 L408.74 353.11 L408.91 337.81 L409.07 341.33 L409.24 341.56 L409.41 325.37 L409.58 340.17 L409.74 335.61 L409.91 347.12 L410.08 338.11 L410.24 335.23 L410.41 338.31 L410.58 340.44 L410.74 335.68 L410.91 339.24 L411.08 332.09 L411.25 338.30 L411.41 343.81 L411.58 350.38 L411.75 343.44 L411.91 341.05 L412.08 346.08 L412.25 345.17 L412.41 348.73 L412.58 345.53 L412.75 338.94 L412.92 341.01 L413.08 340.58 L413.25 341.26 L413.42 340.71 L413.58 335.31 L413.75 328.04 L413.92 335.92 L414.09 328.48 L414.25 340.00 L414.42 339.66 L414.59 330.42 L414.75 343.43 L414.92 344.42 L415.09 340.31 L415.25 348.83 L415.42 349.96 L415.59 333.04 L415.76 345.38 L415.92 342.10 L416.09 341.98 L416.26 344.83 L416.42 335.74 L416.59 336.44 L416.76 335.16 L416.92 335.56 L417.09 339.17 L417.26 331.73 L417.43 333.97 L417.59 342.90 L417.76 339.34 L417.93 342.37 L418.09 329.35 L418.26 335.44 L418.43 336.70 L418.60 339.94 L418.76 336.54 L418.93 344.90 L419.10 339.45 L419.26 339.90 L419.43 339.86 L419.60 343.68 L419.76 337.20 L419.93 345.97 L420.10 342.33 L420.27 340.65 L420.43 340.03 L420.60 342.66 L420.77 345.39 L420.93 345.00 L421.10 341.87 L421.27 344.62 L421.44 340.45 L421.60 346.69 L421.77 339.66 L421.94 328.39 L422.10 347.16 L422.27 340.40 L422.44 333.36 L422.60 338.71 L422.77 334.94 L422.94 351.36 L423.11 342.54 L423.27 331.18 L423.44 342.81 L423.61 337.61 L423.77 350.35 L423.94 334.02 L424.11 327.45 L424.27 340.17 L424.44 337.89 L424.61 337.52 L424.78 328.03 L424.94 342.16 L425.11 349.01 L425.28 329.31 L425.44 346.25 L425.61 336.68 L425.78 352.73 L425.95 342.21 L426.11 338.78 L426.28 347.41 L426.45 342.71 L426.61 336.55 L426.78 343.72 L426.95 337.00 L427.11 329.98 L427.28 350.99 L427.45 337.89 L427.62 336.47 L427.78 341.68 L427.95 331.24 L428.12 332.37 L428.28 337.07 L428.45 336.96 L428.62 340.21 L428.78 347.53 L428.95 337.21 L429.12 342.53 L429.29 343.13 L429.45 333.86 L429.62 341.08 L429.79 334.63 L429.95 345.67 L430.12 342.32 L430.29 339.91 L430.46 332.45 L430.62 340.46 L430.79 335.60 L430.96 343.70 L431.12 339.17 L431.29 335.35 L431.46 344.91 L431.62 343.79 L431.79 336.56 L431.96 346.21 L432.13 338.18 L432.29 338.12 L432.46 340.51 L432.63 335.69 L432.79 337.40 L432.96 338.94 L433.13 348.24 L433.30 348.07 L433.46 338.05 L433.63 348.68 L433.80 339.59 L433.96 341.92 L434.13 344.69 L434.30 341.43 L434.46 353.11 L434.63 341.17 L434.80 333.24 L434.97 347.01 L435.13 337.56 L435.30 338.16 L435.47 323.38 L435.63 345.34 L435.80 344.33 L435.97 344.23 L436.13 345.21 L436.30 349.13 L436.47 339.58 L436.64 344.99 L436.80 335.74 L436.97 337.89 L437.14 345.65 L437.30 341.99 L437.47 332.50 L437.64 341.82 L437.81 338.83 L437.97 335.33 L438.14 342.22 L438.31 337.61 L438.47 331.20 L438.64 332.20 L438.81 349.57 L438.97 331.51 L439.14 341.06 L439.31 343.19 L439.48 343.35 L439.64 333.10 L439.81 338.07 L439.98 340.61 L440.14 344.24 L440.31 336.29 L440.48 333.44 L440.64 345.35 L440.81 345.92 L440.98 341.88 L441.15 336.49 L441.31 342.08 L441.48 340.44 L441.65 344.45 L441.81 332.97 L441.98 340.48 L442.15 338.97 L442.32 333.74 L442.48 341.03 L442.65 340.08 L442.82 337.59 L442.98 342.02 L443.15 332.04 L443.32 339.55 L443.48 342.22 L443.65 341.41 L443.82 345.77 L443.99 333.24 L444.15 331.55 L444.32 341.16 L444.49 342.35 L444.65 351.51 L444.82 343.24 L444.99 335.04 L445.16 344.28 L445.32 335.20 L445.49 329.64 L445.66 354.20 L445.82 341.64 L445.99 343.78 L446.16 342.95 L446.32 349.82 L446.49 341.41 L446.66 346.55 L446.83 334.20 L446.99 332.20 L447.16 349.66 L447.33 347.97 L447.49 342.66 L447.66 341.10 L447.83 340.77 L447.99 336.07 L448.16 348.32 L448.33 343.48 L448.50 342.64 L448.66 341.93 L448.83 345.62 L449.00 342.63 L449.16 343.96 L449.33 333.43 L449.50 342.66 L449.67 351.89 L449.83 337.01 L450.00 339.15 L450.17 344.77 L450.33 345.13 L450.50 343.29 L450.67 330.96 L450.83 342.62 L451.00 333.35 L451.17 335.33 L451.34 342.88 L451.50 338.24 L451.67 344.32 L451.84 357.18 L452.00 344.14 L452.17 343.84 L452.34 334.94 L452.50 336.33 L452.67 334.01 L452.84 336.94 L453.01 333.86 L453.17 336.24 L453.34 338.72 L453.51 334.36 L453.67 332.06 L453.84 332.38 L454.01 342.36 L454.18 340.20 L454.34 345.51 L454.51 345.61 L454.68 338.00 L454.84 343.55 L455.01 331.95 L455.18 355.57 L455.34 346.44 L455.51 338.69 L455.68 333.47 L455.85 341.96 L456.01 329.59 L456.18 335.59 L456.35 343.99 L456.51 340.29 L456.68 337.17 L456.85 345.10 L457.02 334.16 L457.18 341.44 L457.35 337.14 L457.52 335.21 L457.68 342.42 L457.85 334.41 L458.02 350.34 L458.18 336.66 L458.35 350.82 L458.52 333.86 L458.69 343.21 L458.85 333.28 L459.02 332.50 L459.19 340.76 L459.35 343.60 L459.52 332.87 L459.69 346.39 L459.85 335.49 L460.02 340.60 L460.19 341.97 L460.36 343.15 L460.52 329.99 L460.69 348.78 L460.86 342.97 L461.02 337.54 L461.19 334.25 L461.36 330.56 L461.53 330.52 L461.69 342.88 L461.86 338.01 L462.03 333.66 L462.19 336.99 L462.36 348.49 L462.53 338.07 L462.69 336.67 L462.86 347.31 L463.03 342.43 L463.20 340.13 L463.36 336.54 L463.53 331.35 L463.70 333.45 L463.86 337.24 L464.03 338.68 L464.20 341.85 L464.36 343.68 L464.53 341.11 L464.70 341.10 L464.87 334.35 L465.03 328.04 L465.20 337.02 L465.37 334.64 L465.53 336.30 L465.70 338.00 L465.87 333.05 L466.04 333.78 L466.20 339.34 L466.37 340.53 L466.54 336.28 L466.70 342.63 L466.87 338.69 L467.04 334.28 L467.20 340.12 L467.37 350.25 L467.54 336.18 L467.71 346.31 L467.87 347.47 L468.04 348.13 L468.21 335.37 L468.37 350.98 L468.54 340.54 L468.71 338.50 L468.87 338.63 L469.04 343.21 L469.21 340.18 L469.38 338.92 L469.54 346.96 L469.71 335.92 L469.88 334.16 L470.04 344.26 L470.21 343.77 L470.38 345.92 L470.55 334.00 L470.71 345.85 L470.88 342.55 L471.05 352.02 L471.21 333.04 L471.38 341.10 L471.55 338.38 L471.71 331.16 L471.88 334.99 L472.05 346.10 L472.22 336.68 L472.38 334.94 L472.55 344.68 L472.72 345.34 L472.88 345.33 L473.05 335.56 L473.22 339.59 L473.39 345.57 L473.55 335.40 L473.72 335.78 L473.89 344.46 L474.05 348.50 L474.22 333.57 L474.39 325.62 L474.55 331.93 L474.72 334.34 L474.89 339.15 L475.06 343.30 L475.22 339.10 L475.39 336.06 L475.56 340.75 L475.72 334.62 L475.89 339.65 L476.06 336.38 L476.22 354.65 L476.39 344.40 L476.56 335.32 L476.73 334.43 L476.89 337.50 L477.06 330.87 L477.23 335.90 L477.39 335.85 L477.56 344.78 L477.73 337.57 L477.90 335.57 L478.06 332.54 L478.23 333.44 L478.40 339.55 L478.56 338.44 L478.73 346.15 L478.90 335.59 L479.06 345.74 L479.23 341.33 L479.40 339.89 L479.57 326.11 L479.73 332.82 L479.90 344.00 L480.07 347.61 L480.23 341.05 L480.40 344.11 L480.57 337.68 L480.73 337.88 L480.90 336.27 L481.07 345.28 L481.24 341.81 L481.40 338.63 L481.57 338.12 L481.74 342.98 L481.90 341.70 L482.07 335.35 L482.24 349.36 L482.41 341.34 L482.57 339.98 L482.74 348.05 L482.91 345.56 L483.07 339.44 L483.24 342.87 L483.41 334.04 L483.57 336.40 L483.74 327.49 L483.91 346.64 L484.08 329.49 L484.24 343.67 L484.41 335.36 L484.58 334.54 L484.74 338.86 L484.91 341.39 L485.08 343.30 L485.25 349.67 L485.41 341.90 L485.58 344.78 L485.75 336.64 L485.91 343.86 L486.08 340.77 L486.25 337.38 L486.41 339.40 L486.58 339.50 L486.75 340.98 L486.92 342.14 L487.08 337.13 L487.25 335.86 L487.42 344.04 L487.58 330.60 L487.75 336.53 L487.92 348.47 L488.08 321.32 L488.25 336.12 L488.42 343.72 L488.59 330.86 L488.75 354.23 L488.92 325.70 L489.09 347.84 L489.25 350.64 L489.42 344.98 L489.59 338.72 L489.76 341.90 L489.92 335.00 L490.09 344.39 L490.26 333.78 L490.42 338.43 L490.59 345.42 L490.76 333.81 L490.92 337.94 L491.09 340.84 L491.26 332.56 L491.43 346.35 L491.59 341.82 L491.76 331.61 L491.93 339.68 L492.09 335.68 L492.26 336.33 L492.43 340.37 L492.59 336.04 L492.76 345.25 L492.93 336.07 L493.10 345.34 L493.26 339.70 L493.43 344.65 L493.60 336.97 L493.76 337.17 L493.93 333.61 L494.10 343.13 L494.27 345.10 L494.43 351.60 L494.60 348.82 L494.77 341.32 L494.93 338.79 L495.10 342.09 L495.27 339.80 L495.43 348.00 L495.60 345.14 L495.77 335.35 L495.94 336.17 L496.10 347.47 L496.27 341.65 L496.44 338.68 L496.60 346.48 L496.77 337.82 L496.94 338.41 L497.11 337.42 L497.27 329.16 L497.44 344.71 L497.61 333.30 L497.77 336.83 L497.94 334.84 L498.11 343.95 L498.27 339.58 L498.44 340.04 L498.61 330.72 L498.78 339.47 L498.94 331.84 L499.11 341.65 L499.28 341.97 L499.44 339.86 L499.61 351.19 L499.78 342.86 L499.94 343.24 L500.11 340.74 L500.28 338.90 L500.45 345.27 L500.61 346.02 L500.78 332.80 L500.95 345.76 L501.11 342.79 L501.28 346.57 L501.45 342.52 L501.62 333.12 L501.78 333.51 L501.95 350.00 L502.12 341.35 L502.28 332.17 L502.45 341.88 L502.62 337.97 L502.78 327.29 L502.95 324.22 L503.12 328.95 L503.29 341.46 L503.45 339.70 L503.62 338.59 L503.79 341.53 L503.95 343.27 L504.12 328.40 L504.29 338.31 L504.45 335.41 L504.62 333.18 L504.79 336.96 L504.96 339.29 L505.12 338.50 L505.29 331.97 L505.46 337.31 L505.62 351.06 L505.79 334.17 L505.96 330.69 L506.13 341.48 L506.29 343.25 L506.46 342.52 L506.63 333.81 L506.79 345.46 L506.96 335.65 L507.13 333.73 L507.29 336.63 L507.46 339.37 L507.63 343.90 L507.80 344.26 L507.96 339.85 L508.13 345.11 L508.30 340.42 L508.46 344.90 L508.63 332.25 L508.80 331.32 L508.96 344.24 L509.13 332.33 L509.30 338.32 L509.47 339.44 L509.63 337.29 L509.80 337.48 L509.97 347.64 L510.13 326.07 L510.30 344.84 L510.47 352.60 L510.64 340.11 L510.80 339.88 L510.97 343.97 L511.14 350.04 L511.30 333.45 L511.47 340.46 L511.64 338.96 L511.80 343.06 L511.97 340.86 L512.14 343.61 L512.31 337.66 L512.47 340.25 L512.64 336.30 L512.81 336.33 L512.97 339.21 L513.14 339.20 L513.31 333.54 L513.48 348.62 L513.64 339.24 L513.81 332.38 L513.98 346.04 L514.14 334.84 L514.31 342.78 L514.48 339.89 L514.64 341.37 L514.81 340.93 L514.98 336.82 L515.15 340.21 L515.31 351.17 L515.48 327.68 L515.65 340.35 L515.81 342.38 L515.98 334.20 L516.15 332.45 L516.31 351.86 L516.48 337.95 L516.65 351.43 L516.82 342.94 L516.98 340.41 L517.15 342.61 L517.32 343.48 L517.48 346.48 L517.65 342.39 L517.82 340.79 L517.99 340.96 L518.15 347.43 L518.32 344.49 L518.49 334.48 L518.65 336.50 L518.82 341.81 L518.99 336.57 L519.15 337.93 L519.32 334.74 L519.49 338.56 L519.66 342.33 L519.82 345.47 L519.99 340.05 L520.16 351.41 L520.32 339.58 L520.49 357.56 L520.66 345.51 L520.82 342.73 L520.99 337.25 L521.16 324.47 L521.33 338.93 L521.49 340.98 L521.66 350.57 L521.83 332.41 L521.99 350.48 L522.16 338.62 L522.33 343.98 L522.50 326.03 L522.66 340.77 L522.83 338.11 L523.00 343.76 L523.16 340.51 L523.33 333.72 L523.50 345.21 L523.66 344.78 L523.83 343.29 L524.00 345.55 L524.17 346.06 L524.33 339.89 L524.50 332.54 L524.67 332.39 L524.83 347.43 L525.00 343.91 L525.17 340.57 L525.34 337.62 L525.50 340.18 L525.67 340.15 L525.84 338.16 L526.00 336.16 L526.17 354.89 L526.34 341.27 L526.50 336.68 L526.67 332.85 L526.84 336.02 L527.01 343.97 L527.17 344.18 L527.34 338.81 L527.51 340.30 L527.67 338.34 L527.84 333.92 L528.01 347.17 L528.17 342.06 L528.34 353.63 L528.51 335.86 L528.68 339.26 L528.84 344.87 L529.01 338.67 L529.18 332.38 L529.34 334.80 L529.51 340.57 L529.68 341.91 L529.85 339.50 L530.01 345.54 L530.18 345.48 L530.35 341.79 L530.51 340.17 L530.68 338.63 L530.85 343.05 L531.01 345.08 L531.18 340.35 L531.35 342.50 L531.52 338.24 L531.68 332.26 L531.85 334.52 L532.02 344.23 L532.18 342.48 L532.35 348.77 L532.52 340.33 L532.68 344.78 L532.85 347.30 L533.02 345.49 L533.19 336.68 L533.35 339.01 L533.52 340.74 L533.69 334.60 L533.85 343.29 L534.02 345.66 L534.19 337.38 L534.36 350.88 L534.52 338.43 L534.69 338.91 L534.86 338.72 L535.02 336.13 L535.19 342.33 L535.36 340.14 L535.52 349.17 L535.69 343.37 L535.86 342.99 L536.03 338.81 L536.19 332.25 L536.36 339.54 L536.53 335.35 L536.69 345.27 L536.86 339.86 L537.03 349.19 L537.20 344.08 L537.36 344.63 L537.53 341.30 L537.70 341.47 L537.86 343.63 L538.03 346.38 L538.20 336.13 L538.36 342.74 L538.53 354.45 L538.70 339.54 L538.87 338.63 L539.03 336.23 L539.20 332.07 L539.37 346.57 L539.53 340.37 L539.70 341.68 L539.87 350.18 L540.03 353.84 L540.20 335.15 L540.37 345.84 L540.54 343.47 L540.70 342.24 L540.87 342.68 L541.04 339.92 L541.20 348.79 L541.37 343.43 L541.54 341.95 L541.71 346.91 L541.87 344.99 L542.04 342.59 L542.21 341.85 L542.37 349.71 L542.54 342.86 L542.71 339.56 L542.87 335.34 L543.04 338.17 L543.21 334.29 L543.38 340.80 L543.54 341.47 L543.71 328.78 L543.88 340.16 L544.04 343.63 L544.21 340.98 L544.38 334.81 L544.54 347.04 L544.71 335.28 L544.88 333.31 L545.05 334.12 L545.21 339.98 L545.38 346.82 L545.55 346.47 L545.71 341.21 L545.88 333.50 L546.05 336.45 L546.22 335.12 L546.38 338.84 L546.55 330.30 L546.72 340.67 L546.88 343.61 L547.05 339.24 L547.22 342.59 L547.38 334.90 L547.55 332.06 L547.72 336.55 L547.89 346.42 L548.05 345.72 L548.22 337.55 L548.39 346.68 L548.55 338.27 L548.72 348.37 L548.89 342.71 L549.06 337.57 L549.22 344.43 L549.39 335.80 L549.56 334.91 L549.72 332.08 L549.89 341.48 L550.06 339.76 L550.22 339.63 L550.39 337.80 L550.56 347.97 L550.73 337.73 L550.89 336.08 L551.06 346.91 L551.23 347.88 L551.39 341.92 L551.56 330.49 L551.73 336.76 L551.89 343.43 L552.06 340.18 L552.23 348.61 L552.40 332.54 L552.56 343.79 L552.73 336.61 L552.90 347.34 L553.06 339.65 L553.23 345.73 L553.40 336.50 L553.57 332.31 L553.73 333.96 L553.90 336.73 L554.07 334.43 L554.23 346.67 L554.40 347.43 L554.57 341.57 L554.73 334.38 L554.90 339.42 L555.07 336.29 L555.24 348.06 L555.40 341.81 L555.57 342.76 L555.74 337.87 L555.90 329.01 L556.07 335.83 L556.24 333.93 L556.40 342.11 L556.57 340.60 L556.74 334.56 L556.91 337.93 L557.07 350.84 L557.24 333.48 L557.41 335.02 L557.57 338.82 L557.74 335.27 L557.91 337.71 L558.08 343.00 L558.24 349.60 L558.41 327.84 L558.58 339.97 L558.74 340.30 L558.91 339.61 L559.08 339.05 L559.24 338.20 L559.41 345.60 L559.58 337.52 L559.75 339.38 L559.91 340.08 L560.08 340.67 L560.25 339.14 L560.41 345.57 L560.58 340.03 L560.75 341.04 L560.91 339.80 L561.08 334.56 L561.25 335.51 L561.42 334.30 L561.58 341.14 L561.75 336.16 L561.92 334.24 L562.08 341.39 L562.25 342.97 L562.42 330.40 L562.59 351.70 L562.75 340.26 L562.92 339.50 L563.09 345.95 L563.25 340.47 L563.42 336.76 L563.59 355.17 L563.75 334.17 L563.92 339.55 L564.09 344.74 L564.26 334.20 L564.42 339.52 L564.59 342.21 L564.76 353.30 L564.92 335.18 L565.09 339.82 L565.26 343.71 L565.43 340.53 L565.59 333.47 L565.76 342.33 L565.93 340.68 L566.09 342.54 L566.26 346.31 L566.43 345.66 L566.59 342.33 L566.76 341.80 L566.93 334.05 L567.10 339.35 L567.26 341.30 L567.43 337.89 L567.60 340.63 L567.76 334.42 L567.93 348.53 L568.10 351.93 L568.26 337.95 L568.43 342.30 L568.60 338.81 L568.77 347.04 L568.93 342.49 L569.10 340.52 L569.27 338.86 L569.43 340.79 L569.60 333.22 L569.77 343.81 L569.94 335.19 L570.10 343.04 L570.27 340.81 L570.44 346.12 L570.60 340.00 L570.77 345.72 L570.94 335.03 L571.10 343.45 L571.27 338.87 L571.44 341.17 L571.61 340.49 L571.77 345.25 L571.94 328.99 L572.11 341.88 L572.27 331.88 L572.44 346.74 L572.61 329.25 L572.77 334.58 L572.94 330.90 L573.11 349.12 L573.28 333.01 L573.44 340.73 L573.61 337.16 L573.78 330.21 L573.94 338.25 L574.11 343.75 L574.28 339.09 L574.45 345.28 L574.61 338.11 L574.78 340.14 L574.95 337.99 L575.11 342.00 L575.28 350.55 L575.45 342.10 L575.61 341.18 L575.78 336.71 L575.95 335.95 L576.12 348.16 L576.28 333.99 L576.45 335.09 L576.62 339.57 L576.78 337.77 L576.95 350.87 L577.12 327.10 L577.29 342.10 L577.45 344.03 L577.62 333.95 L577.79 336.57 L577.95 342.49 L578.12 349.07 L578.29 335.05 L578.45 331.43 L578.62 345.46 L578.79 348.49 L578.96 338.27 L579.12 327.94 L579.29 348.10 L579.46 339.02 L579.62 346.30 L579.79 339.88 L579.96 338.05 L580.12 337.63 L580.29 348.22 L580.46 348.01 L580.63 328.36 L580.79 334.97 L580.96 349.89 L581.13 338.10 L581.29 332.64 L581.46 340.14 L581.63 339.52 L581.80 339.58 L581.96 337.48 L582.13 338.41 L582.30 337.61 L582.46 341.96 L582.63 335.65 L582.80 338.53 L582.96 339.33 L583.13 347.30 L583.30 342.18 L583.47 339.52 L583.63 343.07 L583.80 342.36 L583.97 346.11 L584.13 342.91 L584.30 349.99 L584.47 347.52 L584.63 339.90 L584.80 337.85 L584.97 346.19 L585.14 342.97 L585.30 339.61 L585.47 332.00 L585.64 330.05 L585.80 342.04 L585.97 344.37 L586.14 344.55 L586.31 333.05 L586.47 345.83 L586.64 337.19 L586.81 342.27 L586.97 342.42 L587.14 335.72 L587.31 336.88 L587.47 328.73 L587.64 333.83 L587.81 330.22 L587.98 342.54 L588.14 340.47 L588.31 345.16 L588.48 342.58 L588.64 336.64 L588.81 342.04 L588.98 337.99 L589.15 343.48 L589.31 341.87 L589.48 334.70 L589.65 340.15 L589.81 340.52 L589.98 338.44 L590.15 345.06 L590.31 349.56 L590.48 338.11 L590.65 338.21 L590.82 327.77 L590.98 339.43 L591.15 337.74 L591.32 328.25 L591.48 341.73 L591.65 343.39 L591.82 336.10 L591.98 338.09 L592.15 334.82 L592.32 344.33 L592.49 331.79 L592.65 338.42 L592.82 350.87 L592.99 340.43 L593.15 342.72 L593.32 339.34 L593.49 333.68 L593.66 339.96 L593.82 342.38 L593.99 334.52 L594.16 342.02 L594.32 346.99 L594.49 346.03 L594.66 331.44 L594.82 334.78 L594.99 331.27 L595.16 346.04 L595.33 343.50 L595.49 344.01 L595.66 335.32 L595.83 333.73 L595.99 340.57 L596.16 340.70 L596.33 335.45 L596.49 340.93 L596.66 343.69 L596.83 341.40 L597.00 334.43 L597.16 328.53 L597.33 338.73 L597.50 341.05 L597.66 338.72 L597.83 337.80 L598.00 336.35 L598.17 344.09 L598.33 339.86 L598.50 341.00 L598.67 334.81 L598.83 336.74 L599.00 341.05 L599.17 334.62 L599.33 333.23 L599.50 338.34 L599.67 346.76 L599.84 341.21 L600.00 350.19 L600.17 339.43 L600.34 338.45 L600.50 332.50 L600.67 336.99 L600.84 348.05 L601.01 341.96 L601.17 345.20 L601.34 344.04 L601.51 340.11 L601.67 339.03 L601.84 340.81 L602.01 343.85 L602.17 342.68 L602.34 342.87 L602.51 341.01 L602.68 335.93 L602.84 338.72 L603.01 334.98 L603.18 345.69 L603.34 325.71 L603.51 338.96 L603.68 353.29 L603.84 338.28 L604.01 333.92 L604.18 340.07 L604.35 347.26 L604.51 339.28 L604.68 343.54 L604.85 340.72 L605.01 338.11 L605.18 357.49 L605.35 340.56 L605.52 337.21 L605.68 337.47 L605.85 342.26 L606.02 342.42 L606.18 344.41 L606.35 340.94 L606.52 332.29 L606.68 343.09 L606.85 338.05 L607.02 338.60 L607.19 332.01 L607.35 336.23 L607.52 336.17 L607.69 339.97 L607.85 332.18 L608.02 340.45 L608.19 340.86 L608.35 334.01 L608.52 336.74 L608.69 335.46 L608.86 345.17 L609.02 326.27 L609.19 338.29 L609.36 331.04 L609.52 337.80 L609.69 344.83 L609.86 336.71 L610.03 340.94 L610.19 334.37 L610.36 350.84 L610.53 345.20 L610.69 346.38 L610.86 332.87 L611.03 334.12 L611.19 346.12 L611.36 339.11 L611.53 338.76 L611.70 342.01 L611.86 333.28 L612.03 344.43 L612.20 340.28 L612.36 342.82 L612.53 336.49 L612.70 343.00 L612.86 336.30 L613.03 346.74 L613.20 346.39 L613.37 345.20 L613.53 343.02 L613.70 343.67 L613.87 325.30 L614.03 345.92 L614.20 338.68 L614.37 340.71 L614.54 338.62 L614.70 332.53 L614.87 337.22 L615.04 344.71 L615.20 347.98 L615.37 336.76 L615.54 335.21 L615.70 348.17 L615.87 335.33 L616.04 351.59 L616.21 340.47 L616.37 335.33 L616.54 345.60 L616.71 351.83 L616.87 332.30 L617.04 348.76 L617.21 338.64 L617.38 348.36 L617.54 338.10 L617.71 331.52 L617.88 342.95 L618.04 345.29 L618.21 351.72 L618.38 352.04 L618.54 344.02 L618.71 338.89 L618.88 337.33 L619.05 338.57 L619.21 334.48 L619.38 338.68 L619.55 326.20 L619.71 341.18 L619.88 340.04 L620.05 354.31 L620.21 344.37 L620.38 337.55 L620.55 343.30 L620.72 333.45 L620.88 336.88 L621.05 329.93 L621.22 348.10 L621.38 344.28 L621.55 333.73 L621.72 339.87 L621.89 345.42 L622.05 342.92 L622.22 342.30 L622.39 335.48 L622.55 336.70 L622.72 340.72 L622.89 345.26 L623.05 335.64 L623.22 334.03 L623.39 346.49 L623.56 335.09 L623.72 346.13 L623.89 341.54 L624.06 345.05 L624.22 349.80 L624.39 343.99 L624.56 344.47 L624.72 335.16 L624.89 336.38 L625.06 343.75 L625.23 350.75 L625.39 347.86 L625.56 352.95 L625.73 341.92 L625.89 341.32 L626.06 345.74 L626.23 340.31 L626.40 339.86 L626.56 334.45 L626.73 345.66 L626.90 334.31 L627.06 343.03 L627.23 330.45 L627.40 346.24 L627.56 334.55 L627.73 344.85 L627.90 331.47 L628.07 337.79 L628.23 346.69 L628.40 335.78 L628.57 340.58 L628.73 336.92 L628.90 327.51 L629.07 341.91 L629.24 342.59 L629.40 334.12 L629.57 344.16 L629.74 335.84 L629.90 334.70 L630.07 340.25 L630.24 336.47 L630.40 352.82 L630.57 331.66 L630.74 344.28 L630.91 345.66 L631.07 329.33 L631.24 330.69 L631.41 343.31 L631.57 337.57 L631.74 342.86 L631.91 346.49 L632.07 338.17 L632.24 334.37 L632.41 325.21 L632.58 341.35 L632.74 335.11 L632.91 341.94 L633.08 341.81 L633.24 332.61 L633.41 349.70 L633.58 346.18 L633.75 344.89 L633.91 333.71 L634.08 337.98 L634.25 337.22 L634.41 337.94 L634.58 334.04 L634.75 342.61 L634.91 341.49 L635.08 342.23 L635.25 337.44 L635.42 347.33 L635.58 341.26 L635.75 325.17 L635.92 336.71 L636.08 339.91 L636.25 345.54 L636.42 338.57 L636.58 338.85 L636.75 336.58 L636.92 343.89 L637.09 337.77 L637.25 336.91 L637.42 336.15 L637.59 343.29 L637.75 337.30 L637.92 331.01 L638.09 343.66 L638.26 335.41 L638.42 342.20 L638.59 342.29 L638.76 346.85 L638.92 347.41 L639.09 337.07 L639.26 339.32 L639.42 331.36 L639.59 349.46 L639.76 342.66 L639.93 347.90 L640.09 338.48 L640.26 328.97 L640.43 348.66 L640.59 340.75 L640.76 340.97 L640.93 340.54 L641.10 343.78 L641.26 343.90 L641.43 331.49 L641.60 346.22 L641.76 336.60 L641.93 337.67 L642.10 349.74 L642.26 345.30 L642.43 338.38 L642.60 330.03 L642.77 341.13 L642.93 343.20 L643.10 339.80 L643.27 333.39 L643.43 335.89 L643.60 333.34 L643.77 341.43 L643.93 344.75 L644.10 345.88 L644.27 336.22 L644.44 341.54 L644.60 343.29 L644.77 337.43 L644.94 339.43 L645.10 351.93 L645.27 341.37 L645.44 345.10 L645.61 337.85 L645.77 340.48 L645.94 330.82 L646.11 340.11 L646.27 346.80 L646.44 351.79 L646.61 348.47 L646.77 344.03 L646.94 340.54 L647.11 336.95 L647.28 339.37 L647.44 343.62 L647.61 335.93 L647.78 345.38 L647.94 334.84 L648.11 330.46 L648.28 334.68 L648.44 331.09 L648.61 332.70 L648.78 346.48 L648.95 339.15 L649.11 341.45 L649.28 346.62 L649.45 347.18 L649.61 337.48 L649.78 347.56 L649.95 342.37 L650.12 340.27 L650.28 342.69 L650.45 332.41 L650.62 335.93 L650.78 339.66 L650.95 343.61 L651.12 338.21 L651.28 339.56 L651.45 345.59 L651.62 348.02 L651.79 344.48 L651.95 347.23 L652.12 338.03 L652.29 338.57 L652.45 342.01 L652.62 338.60 L652.79 337.47 L652.95 349.35 L653.12 339.15 L653.29 334.95 L653.46 342.94 L653.62 350.36 L653.79 340.82 L653.96 347.03 L654.12 337.85 L654.29 337.56 L654.46 336.47 L654.63 339.47 L654.79 350.36 L654.96 333.91 L655.13 349.27 L655.29 334.72 L655.46 338.98 L655.63 344.86 L655.79 343.73 L655.96 341.82 L656.13 331.20 L656.30 342.26 L656.46 334.64 L656.63 354.40 L656.80 339.09 L656.96 341.31 L657.13 333.96 L657.30 336.98 L657.47 333.17 L657.63 345.67 L657.80 338.83 L657.97 343.36 L658.13 336.51 L658.30 337.51 L658.47 347.36 L658.63 334.93 L658.80 330.36 L658.97 342.51 L659.14 334.00 L659.30 337.86 L659.47 345.29 L659.64 335.77 L659.80 345.11 L659.97 336.53 L660.14 348.47 L660.30 347.56 L660.47 337.68 L660.64 339.10 L660.81 335.70 L660.97 341.38 L661.14 346.60 L661.31 332.32 L661.47 345.32 L661.64 333.00 L661.81 335.55 L661.98 330.45 L662.14 351.86 L662.31 340.60 L662.48 341.63 L662.64 336.56 L662.81 346.15 L662.98 328.71 L663.14 340.43 L663.31 352.42 L663.48 338.18 L663.65 340.38 L663.81 343.98 L663.98 335.82 L664.15 340.41 L664.31 345.57 L664.48 341.35 L664.65 342.32 L664.81 338.36 L664.98 342.02 L665.15 340.59 L665.32 348.29 L665.48 344.27 L665.65 338.95 L665.82 326.83 L665.98 344.22 L666.15 344.44 L666.32 335.24 L666.49 329.30 L666.65 334.01 L666.82 345.38 L666.99 334.43 L667.15 337.76 L667.32 341.50 L667.49 347.02 L667.65 340.19 L667.82 339.74 L667.99 336.52 L668.16 349.26 L668.32 346.15 L668.49 339.77 L668.66 332.61 L668.82 335.95 L668.99 343.48 L669.16 335.33 L669.33 345.20 L669.49 342.28 L669.66 341.90 L669.83 343.89 L669.99 343.04 L670.16 334.42 L670.33 338.50 L670.49 353.16 L670.66 333.65 L670.83 337.69 L671.00 346.16 L671.16 339.42 L671.33 335.83 L671.50 333.02 L671.66 343.25 L671.83 345.91 L672.00 348.00 L672.16 340.59 L672.33 346.05 L672.50 333.20 L672.67 341.22 L672.83 336.57 L673.00 341.26" fill="none" stroke="#f8f400" stroke-width="1"/>
<g transform="translate(203.5 367.4) rotate(42)">
<path d="M-25 -11.9L-13 -24.7H25V11.9L13 24.7H-25Z" fill="#000"/>
<path d="M-23 -9.9H10.2V-2.9H-16V15.7H11V22.7H-23Z" fill="#4b7dd2" stroke="#4b7dd2" stroke-width="4" stroke-linejoin="round"/>
<path d="M23 9.9H-10.2V2.9H16V-15.7H-11V-22.7H23Z" fill="#e8392e" stroke="#e8392e" stroke-width="4" stroke-linejoin="round"/>
</g>
<rect x="104" y="400.3" width="208" height="14.7" fill="#000" />
<text x="111" y="412" font-size="15" font-weight="bold" fill="#25b04c" textLength="193.0" lengthAdjust="spacingAndGlyphs">doluongcongnghiep.com</text>
</svg>
</body></html>
